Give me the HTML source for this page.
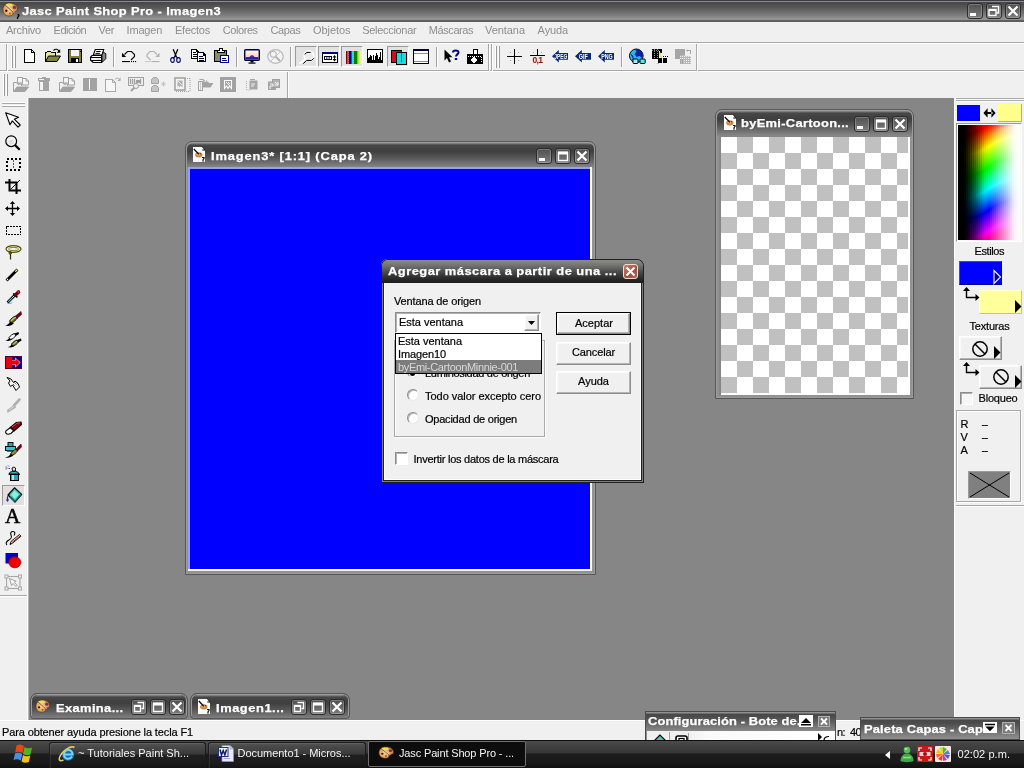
<!DOCTYPE html>
<html>
<head>
<meta charset="utf-8">
<title>Jasc Paint Shop Pro - Imagen3</title>
<style>
*{box-sizing:border-box;margin:0;padding:0}
html,body{width:1024px;height:768px;overflow:hidden;background:#868686;font-family:"Liberation Sans",sans-serif;font-size:11px;color:#000}
.abs{position:absolute}
.t{position:absolute;white-space:pre;line-height:1;font-family:"Liberation Sans",sans-serif}
#app{position:absolute;left:0;top:0;width:1024px;height:768px;overflow:hidden;will-change:transform}
#title{left:0;top:0;width:1024px;height:22px;background:linear-gradient(#3a3c44 0,#3a3c44 1px,#8c8c8c 1px,#8c8c8c 2px,#464646 2px,#4c4c4c 4px,#5a5a5a 8px,#777 14px,#939393 19px,#939393 20.300px,#5e5e5e 20.300px,#5e5e5e 22px)}
.wbtn{position:absolute;width:16px;height:16px;border:1px solid #2c2c2c;border-radius:3px;background:linear-gradient(#505050,#7c7c7c);box-shadow:inset 0 0 0 1px rgba(255,255,255,.22)}
.wbtn svg{position:absolute;left:-1px;top:-1px;width:16px;height:16px}
#menu{left:0;top:22px;width:1024px;height:21px;background:#f0f0f0;border-bottom:1px solid #a8a8a8}
#tb1{left:0;top:43px;width:1024px;height:28px;background:#f0f0f0;border-top:1px solid #fff;border-bottom:1px solid #a8a8a8}
#tb2{left:0;top:71px;width:1024px;height:27px;background:#f0f0f0;border-top:1px solid #fff}
.grip{position:absolute;width:2px;border-left:1px solid #fff;border-right:1px solid #9a9a9a}
.vsep{position:absolute;width:2px;border-left:1px solid #a0a0a0;border-right:1px solid #fff}
.ic{position:absolute;overflow:visible}
.pressed{position:absolute;border:1px solid;border-color:#9a9a9a #fff #fff #9a9a9a;background-color:#e2e2e2}
#lefttb{left:0;top:98px;width:28px;height:500px;background:#f0f0f0}
#right{left:954px;top:98px;width:70px;height:642px;background:#f0f0f0;border-left:1px solid #fff}
#status{left:0;top:720px;width:1024px;height:21px;background:#f0f0f0;border-top:1px solid #fff}
#taskbar{left:0;top:740px;width:1024px;height:28px;background:linear-gradient(#0c0c0c 0,#0c0c0c 1px,#4c4c4c 1px,#424242 5px,#363636 13px,#1c1c1c 14px,#1a1a1a 22px,#101010 28px)}
.mdi{position:absolute;background:#929292;border:1px solid #565656;border-radius:7px 7px 0 0;box-shadow:inset 0 0 0 1px #9c9c9c}
.mdit{position:absolute;left:1px;top:1px;right:1px;height:24px;border-radius:6px 6px 0 0;background:linear-gradient(#8e8e8e 0,#484848 2px,#3e3e3e 8px,#585858 15px,#7a7a7a 22px,#858585 24px)}
#checker{background-color:#fff;background-image:conic-gradient(#c0c0c0 0 25%,#fff 0 50%,#c0c0c0 0 75%,#fff 0);background-size:32px 32px;background-position:0 0}
.btn{position:absolute;background:#f0f0f0;border:1px solid;border-color:#fff #8c8c8c #8c8c8c #fff;box-shadow:inset -1px -1px 0 #b4b4b4,inset 1px 1px 0 #fafafa}
.sunk{position:absolute;background:#fff;border:1px solid;border-color:#8c8c8c #fff #fff #8c8c8c;box-shadow:inset 1px 1px 0 #b0b0b0}
.radio{position:absolute;width:12px;height:12px;border-radius:50%;background:#fff;border:1px solid;border-color:#8c8c8c #e8e8e8 #e8e8e8 #8c8c8c;box-shadow:inset 1px 1px 0 #b8b8b8}
.etch{position:absolute;border:1px solid #a8a8a8;box-shadow:1px 1px 0 #fff,inset 1px 1px 0 #fff}
.tbtn{position:absolute;top:2px;height:26px;border:1px solid #1c1c1c;border-bottom:none;border-radius:3px 3px 0 0;background:linear-gradient(#565656 0,#4a4a4a 3px,#3a3a3a 11px,#202020 12px,#1c1c1c 20px,#121212 26px);box-shadow:inset 1px 1px 0 rgba(255,255,255,.08)}
.pal{position:absolute;border:1px solid #4c4c4c;background:linear-gradient(#909090 0,#909090 1px,#484848 2px,#4c4c4c 5px,#606060 10px,#787878 15px,#8c8c8c 20px,#8c8c8c 100%)}
</style>
</head>
<body>
<div id="app">
<svg width="0" height="0" style="position:absolute"><defs>
<radialGradient id="palg" cx=".4" cy=".55" r=".7"><stop offset="0" stop-color="#f8d090"/><stop offset=".6" stop-color="#e0a050"/><stop offset="1" stop-color="#a87038"/></radialGradient>
<g id="palette"><path d="M1 7.500C1 3.500 4 1 8 1c4.500 0 7.500 2.500 7.500 6 0 2-1.500 2.500-3 2.500-1.500 0-2 1-1.500 2 .5 1.500-1.500 2.500-4 2.500-3.500 0-6-2.500-6-6.500z" fill="url(#palg)" stroke="#50381c" stroke-width=".7"/><ellipse cx="7" cy="3.200" rx="3.500" ry="1.600" fill="#e8e060"/><circle cx="4.300" cy="8.800" r="1.200" fill="#40100c"/><circle cx="12.500" cy="5.500" r="1.700" fill="#802878"/><circle cx="11.500" cy="9.500" r="1.300" fill="#e08070"/><circle cx="8" cy="11.500" r="1.100" fill="#b06020"/><path d="M3 3l8 7" stroke="#705030" stroke-width=".8"/><path d="M4.500 2.500l7 7" stroke="#f4e0b0" stroke-width=".7"/></g>
<g id="docicon"><path d="M0 0h9.500l2.500 2.500v12.500h-12z" fill="#fdfbf8"/><path d="M9.300 0l2.700 2.700M9.300 3h2.700" stroke="#000" stroke-width="1" fill="none"/><ellipse cx="5.800" cy="7.800" rx="3.700" ry="2.600" fill="#c88840"/><ellipse cx="5.500" cy="7.300" rx="2" ry="1.200" fill="#e8b070"/><circle cx="7.300" cy="6.800" r=".7" fill="#603010"/><path d="M0.800 2l5 5.300" stroke="#080820" stroke-width="1.300"/><path d="M9 10.500h2v1l-1 1.200v2" stroke="#000" stroke-width="1.100" fill="none"/></g>
</defs></svg>
<!-- TITLE BAR -->
<div id="title" class="abs"></div>
<svg class="ic" style="left:2px;top:2px" width="17" height="17" viewBox="0 0 17 17"><use href="#palette"/><path d="M15.500 12.500c1.500 0 2 1 1 2l-1 1v1.500" stroke="#000" stroke-width="1.300" fill="none"/></svg>
<div class="t" style="left:22px;top:6.27px;font-size:11.5px;font-weight:bold;color:#fff;letter-spacing:0.331px;transform:scaleX(1.12);transform-origin:0 0;-webkit-text-stroke:0.25px #fff;">Jasc Paint Shop Pro - Imagen3</div>
<div class="wbtn" style="left:967px;top:3px"><svg viewBox="0 0 16 16"><rect x="3" y="10" width="6" height="3" fill="#fff"/></svg></div>
<div class="wbtn" style="left:986px;top:3px"><svg viewBox="0 0 16 16"><path d="M6 3.5h6.5v6.5h-2" fill="none" stroke="#fff" stroke-width="1.6"/><rect x="3" y="6.5" width="7" height="6" fill="none" stroke="#fff" stroke-width="1.4"/><rect x="3" y="6" width="7" height="2" fill="#fff"/></svg></div>
<div class="wbtn" style="left:1005px;top:3px"><svg viewBox="0 0 16 16"><path d="M3.5 3.5l9 9M12.5 3.5l-9 9" stroke="#fff" stroke-width="2.2"/></svg></div>

<!-- MENU -->
<div id="menu" class="abs"></div>
<div class="t" style="left:6px;top:25.29px;font-size:11px;font-weight:normal;color:#8e8e8e;letter-spacing:-0.241px;">Archivo</div>
<div class="t" style="left:53.6px;top:25.29px;font-size:11px;font-weight:normal;color:#8e8e8e;letter-spacing:-0.511px;">Edición</div>
<div class="t" style="left:98.5px;top:25.29px;font-size:11px;font-weight:normal;color:#8e8e8e;letter-spacing:-0.339px;">Ver</div>
<div class="t" style="left:126.6px;top:25.29px;font-size:11px;font-weight:normal;color:#8e8e8e;letter-spacing:-0.201px;">Imagen</div>
<div class="t" style="left:175px;top:25.29px;font-size:11px;font-weight:normal;color:#8e8e8e;letter-spacing:-0.241px;">Efectos</div>
<div class="t" style="left:222.7px;top:25.29px;font-size:11px;font-weight:normal;color:#8e8e8e;letter-spacing:-0.415px;">Colores</div>
<div class="t" style="left:270.5px;top:25.29px;font-size:11px;font-weight:normal;color:#8e8e8e;letter-spacing:-0.359px;">Capas</div>
<div class="t" style="left:313px;top:25.29px;font-size:11px;font-weight:normal;color:#8e8e8e;letter-spacing:-0.060px;">Objetos</div>
<div class="t" style="left:362.3px;top:25.29px;font-size:11px;font-weight:normal;color:#8e8e8e;letter-spacing:-0.317px;">Seleccionar</div>
<div class="t" style="left:428.7px;top:25.29px;font-size:11px;font-weight:normal;color:#8e8e8e;letter-spacing:-0.398px;">Máscaras</div>
<div class="t" style="left:485px;top:25.29px;font-size:11px;font-weight:normal;color:#8e8e8e;letter-spacing:-0.054px;">Ventana</div>
<div class="t" style="left:537.6px;top:25.29px;font-size:11px;font-weight:normal;color:#8e8e8e;letter-spacing:-0.100px;">Ayuda</div>

<div id="tb1" class="abs"></div>
<div id="tb2" class="abs"></div>
<!--TOOLBAR1-->
<!--TOOLBAR2-->
<!-- TOOLBAR 1 frame -->
<div class="abs" style="left:6px;top:44px;width:1px;height:27px;background:#a8a8a8"></div>
<div class="abs" style="left:7px;top:44px;width:1px;height:27px;background:#fff"></div>
<div class="grip" style="left:11px;top:46px;height:22px"></div>
<div class="grip" style="left:14px;top:46px;height:22px"></div>
<!-- new -->
<svg class="ic" style="left:24px;top:49px" width="12" height="14" viewBox="0 0 12 14" shape-rendering="crispEdges"><path d="M0.5 0.5h7l3 3v9.5h-10z" fill="#fff" stroke="#000"/><path d="M7.5 0.5v3h3" fill="none" stroke="#000"/></svg>
<!-- open -->
<svg class="ic" style="left:45px;top:48px" width="16" height="15" viewBox="0 0 16 15"><path d="M0.5 13.5v-9h1l1-1h3l1 1h4v3" fill="#e6e6a0" stroke="#000" shape-rendering="crispEdges"/><path d="M0.5 13.5l3-5.5h12l-3.5 5.5z" fill="#808040" stroke="#000" stroke-linejoin="miter"/><path d="M8.5 2.5c2-2 4.5-1.5 5.5 1" fill="none" stroke="#000" stroke-width="1.1"/><path d="M15.2 1.2v3.6h-3.6z" fill="#000"/></svg>
<!-- save -->
<svg class="ic" style="left:68px;top:49px" width="14" height="14" viewBox="0 0 14 14" shape-rendering="crispEdges"><rect x="0.5" y="0.5" width="13" height="13" fill="#808040" stroke="#000"/><rect x="3" y="1" width="8" height="6" fill="#f4f4f4"/><rect x="3" y="9" width="8" height="4" fill="#000"/><rect x="8" y="10" width="2" height="3" fill="#fff"/><rect x="11.5" y="1.5" width="1" height="1" fill="#000"/></svg>
<!-- print -->
<svg class="ic" style="left:90px;top:48px" width="17" height="15" viewBox="0 0 17 15"><path d="M5.300 1.500h8.400l-1.700 5.500H3.300z" fill="#fff" stroke="#000" stroke-width="1.100"/><path d="M6.200 3.500h4.400M5.500 5.400h4.400" stroke="#000" stroke-width="1"/><path d="M11.800 7.200l1.500-3 2.500 1.500v5l-3.600 3.600z" fill="#8a8a8a" stroke="#000" stroke-width=".9"/><path d="M2 7.500h9.500v7H3L0.600 12V9z" fill="#fff" stroke="#000" stroke-width="1.100"/><path d="M0.600 9.500h11M0.600 12.500h11" stroke="#000" stroke-width="1.100"/><rect x="6.500" y="10.500" width="3.500" height="1" fill="#d0d0a0"/></svg>
<div class="vsep" style="left:113px;top:47px;height:20px"></div>
<!-- undo -->
<svg class="ic" style="left:122px;top:50px" width="15" height="13" viewBox="0 0 15 13"><path d="M2.500 4.500L5.500 1.500H9.500L12.500 4.500V6.500L9 10" fill="none" stroke="#000" stroke-width="1.100"/><path d="M0 2.800v4.200h4.200z" fill="#000"/><rect x="0" y="11" width="8" height="1.100" fill="#000"/><rect x="9" y="11" width="1.100" height="1.100" fill="#000"/><rect x="11" y="11" width="1.100" height="1.100" fill="#000"/><rect x="13" y="11" width="1.100" height="1.100" fill="#000"/></svg>
<!-- redo (disabled) -->
<svg class="ic" style="left:145px;top:50px" width="15" height="13" viewBox="0 0 15 13"><g transform="translate(14.500,0) scale(-1,1)"><path d="M2.500 4.500L5.500 1.500H9.500L12.500 4.500V6.500L9 10" fill="none" stroke="#b0b0b0" stroke-width="1.100"/><path d="M0 2.800v4.200h4.200z" fill="#b0b0b0"/><rect x="0" y="11" width="8" height="1.100" fill="#b0b0b0"/><rect x="9" y="11" width="1.100" height="1.100" fill="#b0b0b0"/><rect x="11" y="11" width="1.100" height="1.100" fill="#b0b0b0"/><rect x="13" y="11" width="1.100" height="1.100" fill="#b0b0b0"/></g></svg>
<!-- cut -->
<svg class="ic" style="left:170px;top:49px" width="11" height="14" viewBox="0 0 11 14"><path d="M3.200 0.300l3.300 8M7.800 0.300l-3.300 8" stroke="#000" stroke-width="1.300" fill="none"/><ellipse cx="2.500" cy="11" rx="1.800" ry="2.400" fill="none" stroke="#000060" stroke-width="1.100"/><ellipse cx="8.500" cy="11" rx="1.800" ry="2.400" fill="none" stroke="#000060" stroke-width="1.100"/><path d="M4.500 8l-1.200 1.200M6.500 8l1.200 1.200" stroke="#000060" stroke-width="1.200"/></svg>
<!-- copy -->
<svg class="ic" style="left:191px;top:49px" width="16" height="13" viewBox="0 0 16 13" shape-rendering="crispEdges"><path d="M0.500 0.500h5l2 2v6.500h-7z" fill="#fff" stroke="#000"/><path d="M2 3h3M2 5h4M2 7h4" stroke="#000"/><path d="M6.500 3.500h5.500l2.500 2.500v6.500h-8z" fill="#fff" stroke="#000030"/><path d="M8 7h4M8 9h5M8 11h5" stroke="#000030"/><path d="M5.500 0.500v2h2M12 3.500v2.500h2.500" fill="none" stroke="#000"/></svg>
<!-- paste -->
<svg class="ic" style="left:214px;top:48px" width="16" height="15" viewBox="0 0 16 15" shape-rendering="crispEdges"><rect x="0.500" y="2.500" width="12" height="11" fill="#8c8c6c" stroke="#000"/><path d="M3.500 4.500v-2h1.500l1-2h2l1 2h1.500v2z" fill="#fff" stroke="#000"/><rect x="6.500" y="7.500" width="8" height="7" fill="#fff" stroke="#000080"/><path d="M8 10h4M8 12h5" stroke="#000080"/></svg>
<div class="vsep" style="left:236px;top:47px;height:20px"></div>
<!-- monitor -->
<svg class="ic" style="left:244px;top:49px" width="16" height="15" viewBox="0 0 16 15"><defs><linearGradient id="sky" x1="0" y1="0" x2="0" y2="1"><stop offset="0" stop-color="#fff"/><stop offset=".6" stop-color="#ffd8c0"/><stop offset="1" stop-color="#fff"/></linearGradient></defs><rect x="0.700" y="0.700" width="14.600" height="10.600" rx="1" fill="url(#sky)" stroke="#000040" stroke-width="1.400"/><path d="M1.500 9.500V8h4c1-2.500 4-2.500 5 0h4v1.500z" fill="#6020a0"/><rect x="1.500" y="8.500" width="13" height="2" fill="#2020a0"/><rect x="6.500" y="11.500" width="3" height="2" fill="#000"/><rect x="4.500" y="13.500" width="7" height="1.200" fill="#000"/></svg>
<!-- gray circle -->
<svg class="ic" style="left:267px;top:49px" width="17" height="15" viewBox="0 0 17 15"><ellipse cx="8.500" cy="7.500" rx="7.700" ry="6.800" fill="#f4f4f4" stroke="#b8b8b8" stroke-width="1.200"/><circle cx="6.300" cy="5.300" r="3" fill="none" stroke="#b8b8b8" stroke-width="1.100"/><path d="M8.500 7.500l4.500 4.500" stroke="#b0b0b0" stroke-width="1.800"/><path d="M13.500 2.500l-10 10" stroke="#c4c4c4" stroke-width="1"/></svg>
<div class="vsep" style="left:290px;top:47px;height:20px"></div>
<!-- pressed: magnifier -->
<div class="pressed" style="left:295px;top:46px;width:22px;height:21px"></div>
<svg class="ic" style="left:298px;top:49px" width="17" height="16" viewBox="0 0 17 16"><path d="M9.200 2h3.600l2.900 2.900v3.800l-2.900 2.900H9.200L6.300 8.700V4.900z" fill="#ececec" stroke="#fff" stroke-width="1.500"/><path d="M7 10.300L1.300 14.700" stroke="#fff" stroke-width="1.800"/><path d="M6.800 5.500L8.600 3.400h4" fill="none" stroke="#000" stroke-width="1"/><path d="M15.600 9.300l-2.100 2.100H8.500L5.300 14.700" fill="none" stroke="#000" stroke-width="1"/></svg>
<!-- pressed: tool options -->
<div class="pressed" style="left:318px;top:46px;width:22px;height:21px"></div>
<svg class="ic" style="left:322px;top:52px" width="16" height="11" viewBox="0 0 16 11" shape-rendering="crispEdges"><rect x="0.500" y="0.500" width="15" height="10" fill="#fff" stroke="#000"/><rect x="0" y="0" width="16" height="2" fill="#000080"/><rect x="2" y="4" width="8" height="4" fill="#000020"/><g shape-rendering="auto"><rect x="3" y="5" width="1.400" height="2" fill="#fff"/><rect x="5.300" y="5" width="1.400" height="2" fill="#fff"/><rect x="7.600" y="5" width="1.400" height="2" fill="#fff"/></g><path d="M12.500 3l-2 2.500h4zM12.500 9.500l-2-2.500h4z" fill="#000" shape-rendering="auto"/><rect x="12" y="4" width="1" height="4" fill="#000"/></svg>
<!-- pressed: colour stripes -->
<div class="pressed" style="left:341px;top:46px;width:22px;height:21px"></div>
<svg class="ic" style="left:346px;top:51px;overflow:hidden" width="16" height="13" viewBox="0 0 16 13"><rect x="0" y="0" width="1.800" height="13" fill="#800000"/><rect x="1.500" y="0" width="1.700" height="13" fill="#e07088"/><rect x="3" y="0" width="2.700" height="13" fill="#000080"/><rect x="5.500" y="0" width="2.700" height="13" fill="#40e8e8"/><rect x="8" y="0" width="3.200" height="13" fill="#008000"/><rect x="11" y="0" width="2.700" height="13" fill="#a8f040"/><rect x="13.500" y="0" width="2.500" height="13" fill="#f8f4a0"/><path d="M3.200 0v13" stroke="#000080" stroke-width="1.200" stroke-dasharray="1 1"/><path d="M5.700 .5v13" stroke="#000080" stroke-width="1" stroke-dasharray="1 1"/><path d="M8.200 0v13" stroke="#008000" stroke-width="1" stroke-dasharray="1 1"/><path d="M11.200 .5v13" stroke="#008000" stroke-width="1" stroke-dasharray="1 1"/></svg>
<!-- histogram -->
<svg class="ic" style="left:367px;top:49px" width="16" height="14" viewBox="0 0 16 14" shape-rendering="crispEdges"><rect x="0" y="0" width="16" height="14" fill="#000"/><rect x="1" y="1" width="1" height="8" fill="#fff"/><rect x="2" y="1" width="1" height="7" fill="#fff"/><rect x="3" y="1" width="1" height="5" fill="#fff"/><rect x="4" y="1" width="1" height="6" fill="#fff"/><rect x="5" y="1" width="1" height="10" fill="#fff"/><rect x="6" y="1" width="1" height="5" fill="#fff"/><rect x="7" y="1" width="1" height="10" fill="#fff"/><rect x="8" y="1" width="1" height="6" fill="#fff"/><rect x="9" y="1" width="1" height="3" fill="#fff"/><rect x="10" y="1" width="1" height="5" fill="#fff"/><rect x="11" y="1" width="1" height="9" fill="#fff"/><rect x="12" y="1" width="1" height="7" fill="#fff"/><rect x="13" y="1" width="1" height="2" fill="#fff"/><rect x="14" y="1" width="1" height="10" fill="#fff"/></svg>
<!-- pressed: layers -->
<div class="pressed" style="left:387px;top:46px;width:22px;height:21px"></div>
<svg class="ic" style="left:391px;top:50px" width="16" height="15" viewBox="0 0 16 15" shape-rendering="crispEdges"><rect x="0.500" y="0.500" width="10" height="12" fill="#c81020" stroke="#000"/><rect x="5.500" y="2.500" width="10" height="12" fill="#20d8e0" stroke="#000"/><path d="M10.500 3v9" stroke="#0a7080"/></svg>
<!-- window -->
<svg class="ic" style="left:413px;top:49px" width="16" height="15" viewBox="0 0 16 15" shape-rendering="crispEdges"><rect x="0.500" y="0.500" width="15" height="14" fill="#fff" stroke="#000"/><rect x="0" y="0" width="16" height="2" fill="#000030"/><path d="M1 4.500h14M1 12.500h14" stroke="#909090"/></svg>
<div class="vsep" style="left:436px;top:47px;height:20px"></div>
<!-- help cursor -->
<svg class="ic" style="left:444px;top:49px" width="16" height="14" viewBox="0 0 16 14"><path d="M0.500 0.500v11l2.500-2.500 2 4.500 2-1-2-4.300h3.500z" fill="#000"/><path d="M9 3.500c0-2.500 5.500-2.800 5.500 0 0 1.800-2.500 2-2.500 4" fill="none" stroke="#000080" stroke-width="2"/><rect x="10.800" y="9" width="2.400" height="2" fill="#000080"/></svg>
<!-- camera -->
<svg class="ic" style="left:467px;top:49px" width="16" height="15" viewBox="0 0 16 15" shape-rendering="crispEdges"><rect x="6.500" y="0.500" width="4" height="5" fill="#fff" stroke="#000"/><rect x="0" y="5" width="16" height="10" fill="#000"/><path d="M1 7.500h14" stroke="#fff" stroke-dasharray="1 1"/><path d="M14.500 8v5" stroke="#fff" stroke-dasharray="1 1"/><path d="M5 9h1v-1h2v1h1v1h1v2h-1v1h-1v1h-2v-1h-1v-1h-1v-2h1z" fill="#fff"/></svg>
<div class="abs" style="left:488px;top:44px;width:1px;height:27px;background:#a8a8a8"></div>
<div class="abs" style="left:489px;top:44px;width:1px;height:27px;background:#fff"></div>
<!-- TOOLBAR 1b -->
<div class="abs" style="left:491px;top:44px;width:1px;height:27px;background:#a8a8a8"></div>
<div class="abs" style="left:492px;top:44px;width:1px;height:27px;background:#fff"></div>
<div class="grip" style="left:495px;top:46px;height:22px"></div>
<div class="grip" style="left:498px;top:46px;height:22px"></div>
<!-- crosshair -->
<svg class="ic" style="left:507px;top:49px" width="15" height="15" viewBox="0 0 15 15" shape-rendering="crispEdges"><path d="M0 7.500h15M7.500 0v15" stroke="#000"/><path d="M3.500 3v1M11.500 3v1M3.500 11v1M11.500 11v1" stroke="#a0a0a0"/></svg>
<!-- grid 0,1 -->
<svg class="ic" style="left:530px;top:49px" width="15" height="15" viewBox="0 0 15 15" shape-rendering="crispEdges"><path d="M0 6.500h15M7.500 0v6" stroke="#000"/><path d="M3.500 3v1M11.500 3v1" stroke="#a0a0a0"/><rect x="2" y="8" width="11" height="7" fill="#fbe4e0"/></svg>
<div class="t" style="left:532.5px;top:55.80px;font-size:8.5px;font-weight:bold;color:#802020;letter-spacing:-0.609px;">0,1</div>
<!-- JPEG GIF PNG -->
<svg class="ic" style="left:552px;top:50px" width="17" height="13" viewBox="0 0 17 13"><path d="M0 6.300L6.800 0V3H16V9.800H6.800V12.600z" fill="#0c2878"/><text x="2.2" y="8.900" font-family="Liberation Sans" font-size="7.500" font-weight="bold" fill="#fff" textLength="13" lengthAdjust="spacingAndGlyphs">JPEG</text></svg>
<svg class="ic" style="left:575px;top:50px" width="17" height="13" viewBox="0 0 17 13"><path d="M0 6.300L6.800 0V3H16V9.800H6.800V12.600z" fill="#0c2878"/><text x="3.8" y="8.900" font-family="Liberation Sans" font-size="7.500" font-weight="bold" fill="#fff" textLength="9" lengthAdjust="spacingAndGlyphs">GIF</text></svg>
<svg class="ic" style="left:598px;top:50px" width="17" height="13" viewBox="0 0 17 13"><path d="M0 6.300L6.800 0V3H16V9.800H6.800V12.600z" fill="#0c2878"/><text x="3.2" y="8.900" font-family="Liberation Sans" font-size="7.500" font-weight="bold" fill="#fff" textLength="11.5" lengthAdjust="spacingAndGlyphs">PNG</text></svg>
<div class="vsep" style="left:621px;top:47px;height:20px"></div>
<!-- globe -->
<svg class="ic" style="left:629px;top:48px" width="17" height="16" viewBox="0 0 17 16"><circle cx="7.300" cy="7.800" r="6.800" fill="#28b8f0" stroke="#000" stroke-width="1"/><path d="M7.300 1c4 0 6.800 3 6.800 6.800 0 1-.2 2-.6 2.700l-3-2.500-3 1-2-3 2-2.500-1.500-2c.4-.3.900-.5 1.300-.5z" fill="#0828a0"/><path d="M2 6.500c1.500 1 2.500 3 2 5.500" stroke="#0828a0" stroke-width="1.100" fill="none"/><rect x="4" y="11" width="5" height="4.500" rx=".8" fill="#a0ecf4" stroke="#000" stroke-width="1"/><rect x="11" y="11" width="5.200" height="4.500" rx=".8" fill="#60e0e8" stroke="#000" stroke-width="1"/></svg>
<!-- black squares -->
<svg class="ic" style="left:652px;top:49px" width="16" height="15" viewBox="0 0 16 15" shape-rendering="crispEdges"><rect x="0" y="0" width="10" height="10" fill="#000"/><path d="M2.500 0v10M5.500 0v10" stroke="#909090" stroke-dasharray="1 1"/><path d="M0 1.500h10" stroke="#808080" stroke-dasharray="1 1"/><rect x="7" y="2" width="3" height="7" fill="#f0f0e0"/><rect x="8" y="1" width="2" height="3" fill="#000"/><rect x="6" y="9" width="4" height="5" fill="#000"/><rect x="11" y="9" width="4" height="5" fill="#000"/><path d="M11 7.500h5" stroke="#000" stroke-dasharray="1 1"/><path d="M7.500 3l1 4 1.500 2" stroke="#e0d860" stroke-width="1.200" fill="none" shape-rendering="auto"/><path d="M6 14.500l1-1" stroke="#000" shape-rendering="auto"/></svg>
<!-- gray squares -->
<svg class="ic" style="left:675px;top:49px" width="16" height="15" viewBox="0 0 16 15" shape-rendering="crispEdges"><rect x="0" y="0" width="10" height="10" fill="#a6a6a6"/><rect x="5" y="6" width="11" height="9" fill="#b8b8b8"/><path d="M5 7.500h11M5 9.500h11M5 11.500h11M5 13.500h11" stroke="#ececec" stroke-dasharray="1 1"/><path d="M5.500 10v5M7.500 10v5" stroke="#a6a6a6"/><rect x="10" y="6" width="6" height="1" fill="#f0f0f0"/><path d="M11.500 1.500h3.500v3.500" stroke="#a8a8a8" fill="none"/><path d="M11 1.500l1.500-1.500v3z" fill="#a8a8a8" shape-rendering="auto"/></svg>
<div class="abs" style="left:696px;top:44px;width:1px;height:27px;background:#a8a8a8"></div>
<div class="abs" style="left:697px;top:44px;width:1px;height:27px;background:#fff"></div>
<!-- TOOLBAR 2 -->
<div class="grip" style="left:3px;top:74px;height:22px"></div>
<div class="grip" style="left:6px;top:74px;height:22px"></div>
<div class="abs" style="left:287px;top:72px;width:1px;height:26px;background:#a8a8a8"></div>
<div class="abs" style="left:288px;top:72px;width:1px;height:26px;background:#fff"></div>
<!-- 1 folder+pages -->
<svg class="ic" style="left:13px;top:77px" width="16" height="15" viewBox="0 0 16 15"><g id="fp"><rect x="4.500" y="0.500" width="5" height="5.500" fill="#f4f4f4" stroke="#a2a2a2"/><path d="M9.500 1.500h3.500l2.500 2.500v4h-6z" fill="#f6f6f6" stroke="#a2a2a2"/><path d="M13 1.500v2.500h2.500" fill="none" stroke="#a2a2a2"/><path d="M0.500 14.500v-9h3l1 1.500h4v2" fill="none" stroke="#a2a2a2"/><path d="M0.500 14.500L4 10h11.500l-3.500 4.500z" fill="#a2a2a2" stroke="#a2a2a2"/><path d="M5 8l2.500-2" stroke="#a2a2a2" stroke-width="1"/></g></svg>
<!-- 2 trash -->
<svg class="ic" style="left:38px;top:77px" width="13" height="14" viewBox="0 0 13 14" shape-rendering="crispEdges"><rect x="0.500" y="1.500" width="11" height="2" fill="#f4f4f4" stroke="#a4a4a4"/><rect x="4.500" y="0.500" width="3" height="1" fill="none" stroke="#a4a4a4"/><rect x="1.500" y="4.500" width="9" height="9" fill="#f4f4f4" stroke="#a4a4a4"/><rect x="5" y="4" width="6" height="10" fill="#a4a4a4"/><rect x="6" y="1" width="6" height="3" fill="#a4a4a4"/></svg>
<!-- 3 folder+pages -->
<svg class="ic" style="left:59px;top:77px" width="16" height="15" viewBox="0 0 16 15"><use href="#fp"/></svg>
<!-- 4 filled rect -->
<svg class="ic" style="left:83px;top:78px" width="14" height="13" viewBox="0 0 14 13" shape-rendering="crispEdges"><rect x="0" y="0" width="14" height="13" fill="#a2a2a2"/><rect x="6" y="1" width="1" height="11" fill="#fff"/></svg>
<!-- 5 page+arrow -->
<svg class="ic" style="left:105px;top:77px" width="16" height="15" viewBox="0 0 16 15"><path d="M0.500 2.500h7l3 3v9h-10z" fill="#f6f6f6" stroke="#a8a8a8" shape-rendering="crispEdges"/><path d="M7.500 2.500v3h3" fill="none" stroke="#a8a8a8"/><path d="M10 2.500c1.500-2 4-1.500 5 .5" fill="none" stroke="#a8a8a8"/><path d="M15.500 0.500v3.500h-3z" fill="#a8a8a8"/></svg>
<!-- 6 browse -->
<svg class="ic" style="left:128px;top:77px" width="16" height="15" viewBox="0 0 16 15"><rect x="0.500" y="0.500" width="15" height="8" fill="#ececec" stroke="#a0a0a0" shape-rendering="crispEdges"/><path d="M2.500 2v5M4.500 2v5M6.500 2v5M8.500 3v4M12.500 2v5" stroke="#a0a0a0" stroke-width="1.200"/><rect x="9" y="3" width="4" height="3" fill="#a0a0a0"/><circle cx="8" cy="9" r="2.500" fill="#f0f0f0" stroke="#a0a0a0"/><path d="M6.500 10.500l-3.500 3.500" stroke="#a0a0a0" stroke-width="2"/></svg>
<!-- 7 blobs -->
<svg class="ic" style="left:151px;top:77px" width="17" height="15" viewBox="0 0 17 15"><path d="M0.500 6.500v-4l2-2h3l2 2v4z" fill="#c4c4c4" stroke="#a4a4a4"/><path d="M0.500 14.500v-4l2-2h3l2 2v4z" fill="#c4c4c4" stroke="#a4a4a4"/><path d="M12.500 4.500v5M10 7h5M11 5.500l3 3M14 5.500l-3 3" stroke="#c0c0c0" stroke-width=".9"/></svg>
<!-- 8 mask outline -->
<svg class="ic" style="left:174px;top:77px" width="17" height="15" viewBox="0 0 17 15"><rect x="1" y="1" width="10" height="12" fill="#f4f4f4" stroke="#a4a4a4" stroke-width="1.600"/><path d="M3.500 3.500h5v7l-2-2-1 2-1-2-1 2z" fill="#b0b0b0"/><path d="M4 4l4 4" stroke="#f0f0f0"/><path d="M11 1.500h5.500M16 1v13M2 14.500h14" stroke="#a4a4a4" stroke-dasharray="1 1" fill="none"/></svg>
<!-- 9 folder+film -->
<svg class="ic" style="left:198px;top:79px" width="16" height="12" viewBox="0 0 16 12"><path d="M1.500 0.500h4v2" fill="none" stroke="#a4a4a4"/><rect x="0.500" y="2.500" width="4" height="9" fill="#f0f0f0" stroke="#a4a4a4"/><path d="M2 4h1M2 6h1M2 8h1M2 10h1" stroke="#a4a4a4"/><path d="M5 2.500h5l1 1.500h4.500l-3 4.500H5z" fill="#a4a4a4"/><path d="M6 1.500h4" stroke="#c0c0c0" stroke-dasharray="1 1"/></svg>
<!-- 10 filled mask -->
<svg class="ic" style="left:220px;top:77px" width="16" height="15" viewBox="0 0 16 15"><rect x="0" y="0" width="16" height="15" fill="#a2a2a2"/><path d="M4.500 3.500h7v8l-2-2.500-1.500 2.500-1.500-2.500-2 2.500z" fill="none" stroke="#fff" stroke-width="1.100"/><path d="M6 5l4 4M8 5l2 2" stroke="#fff" stroke-width=".9"/></svg>
<!-- 11 -->
<svg class="ic" style="left:246px;top:79px" width="12" height="11" viewBox="0 0 12 11"><rect x="3.500" y="1.500" width="8" height="9" fill="#a6a6a6"/><path d="M4 0.500h5" stroke="#a6a6a6"/><path d="M0.500 2v9h4" stroke="#b0b0b0" stroke-dasharray="1 1" fill="none"/><path d="M5 5h4M5 7h3" stroke="#f0f0f0"/></svg>
<!-- 12 -->
<svg class="ic" style="left:268px;top:79px" width="12" height="11" viewBox="0 0 12 11"><rect x="0" y="2.500" width="8" height="8.500" fill="#a6a6a6"/><rect x="4.500" y="0.500" width="7" height="8" fill="#b4b4b4" stroke="#a0a0a0"/><path d="M2 5h3v2h-3v3M7 3l3 3M10 3v3h-3" stroke="#f4f4f4" fill="none"/></svg>
<div class="abs" style="left:0;top:98px;width:28px;height:622px;background:#f0f0f0"></div>
<!-- LEFT TOOLBOX -->
<div class="abs" style="left:27px;top:98px;width:1px;height:622px;background:#fdfdfd"></div>
<div class="abs" style="left:28px;top:98px;width:1px;height:622px;background:#b4b4b4"></div>
<div class="abs" style="left:2px;top:102px;width:23px;height:1px;background:#fff"></div>
<div class="abs" style="left:2px;top:103px;width:23px;height:1px;background:#a8a8a8"></div>
<div class="abs" style="left:2px;top:105px;width:23px;height:1px;background:#fff"></div>
<div class="abs" style="left:2px;top:106px;width:23px;height:1px;background:#a8a8a8"></div>
<!-- arrow -->
<svg class="ic" style="left:5px;top:112px" width="17" height="17" viewBox="0 0 17 17"><path d="M0.700 0.700l4.300 12 2.300-3.800 5.700 6.300 2.200-2.200-5.900-5.800 4.200-1.900z" fill="#fff" stroke="#000" stroke-width="1.100" stroke-linejoin="round"/></svg>
<!-- zoom -->
<svg class="ic" style="left:5px;top:135px" width="16" height="16" viewBox="0 0 16 16"><circle cx="6.200" cy="6.200" r="5.400" fill="#f4f4f4" stroke="#000" stroke-width="1.200"/><circle cx="6.200" cy="6.800" r="2.600" fill="#e0e0e0"/><path d="M10.200 10.200l4.500 4.500" stroke="#000" stroke-width="2.300"/></svg>
<!-- selection -->
<svg class="ic" style="left:6px;top:158px" width="15" height="13" viewBox="0 0 15 13" shape-rendering="crispEdges"><rect x="1" y="1" width="13" height="11" fill="none" stroke="#000" stroke-width="2" stroke-dasharray="2 2"/><path d="M7.500 2v9" stroke="#606060" stroke-width="1" stroke-dasharray="2 1"/></svg>
<!-- crop -->
<svg class="ic" style="left:5px;top:179px" width="16" height="15" viewBox="0 0 16 15"><path d="M4.500 0v11.500H16M0 3.500h11.500V15" fill="none" stroke="#000" stroke-width="2"/><path d="M5.500 10.500L15 1" stroke="#000" stroke-width=".9"/></svg>
<!-- move -->
<svg class="ic" style="left:5px;top:201px" width="16" height="16" viewBox="0 0 16 16"><path d="M7.500 2v11M2 7.500h11" stroke="#000" stroke-width="1.300"/><path d="M7.500 0l2.600 3h-5.200zM7.500 15l2.600-3h-5.200zM0 7.500l3-2.600v5.200zM15 7.500l-3-2.600v5.200z" fill="#000"/></svg>
<!-- dashed rect -->
<svg class="ic" style="left:6px;top:226px" width="15" height="9" viewBox="0 0 15 9" shape-rendering="crispEdges"><rect x="0.500" y="0.500" width="14" height="8" fill="none" stroke="#000" stroke-width="1" stroke-dasharray="2 1"/></svg>
<!-- lasso -->
<svg class="ic" style="left:5px;top:245px" width="17" height="15" viewBox="0 0 17 15"><ellipse cx="8.500" cy="4" rx="7.500" ry="3.300" fill="#f4f4c0" stroke="#505000" stroke-width="1.200"/><ellipse cx="8.500" cy="4" rx="5" ry="1.600" fill="#f0f0f0" stroke="#606010" stroke-width=".8"/><path d="M5.500 6.500c-1 1.500 0 2.500 0 3.500v4.500" fill="none" stroke="#303000" stroke-width="1.200"/><circle cx="5.300" cy="8" r="1.300" fill="none" stroke="#404000" stroke-width=".9"/></svg>
<!-- magic wand -->
<svg class="ic" style="left:5px;top:267px" width="16" height="16" viewBox="0 0 16 16"><circle cx="12" cy="4" r="4" fill="#f8f8dc"/><path d="M1.500 13.500L12.500 2.500" stroke="#000" stroke-width="2.800"/><path d="M10.300 4.700l2-2" stroke="#fff" stroke-width="1.200"/><path d="M2 13l1-1" stroke="#fff" stroke-width="1.100"/></svg>
<!-- dropper -->
<svg class="ic" style="left:6px;top:289px" width="16" height="16" viewBox="0 0 16 16"><path d="M0 14.800h5.500l1-1.500z" fill="#40c8d8"/><path d="M1.500 13.500L9 6" stroke="#000" stroke-width="2.600"/><path d="M2.200 12.800L5.500 9.500" stroke="#50b8d8" stroke-width="1.100"/><path d="M5.500 9.500l3-3" stroke="#e8e8e8" stroke-width="1"/><path d="M7.300 4.300l4 4" stroke="#000" stroke-width="1.800"/><path d="M10 5.500l2.500-2.500" stroke="#780010" stroke-width="3.600" stroke-linecap="round"/><circle cx="12.500" cy="2.800" r=".9" fill="#d84050"/></svg>
<!-- brush -->
<svg class="ic" style="left:5px;top:311px" width="17" height="15" viewBox="0 0 17 15"><path d="M0 14.500c3-.5 4-2 5-4l4 1.500c-2 2.500-5 3.500-9 2.500z" fill="#000"/><path d="M4.500 10c1.500-2.500 4-4.500 6-5l1.500 2.500c-1 1.500-3 3.500-6 4.500z" fill="#707020" stroke="#000" stroke-width=".8"/><path d="M6 10c1-1.500 3-3 5-4" stroke="#d0d070" stroke-width="1.200" fill="none"/><path d="M10.500 5L16 0.500l.5 3L12 7.500z" fill="#700018" stroke="#400010" stroke-width=".6"/></svg>
<!-- clone brush -->
<svg class="ic" style="left:5px;top:332px" width="17" height="16" viewBox="0 0 17 16"><g id="br2"><path d="M0 8.500c2.500 0 3.500-1.500 4.500-3l3 1.500c-2 2-4.500 2.500-7.500 1.500z" fill="#000"/><path d="M4 5.500c1.500-2 3.500-3.500 5.500-4l1.200 2.300c-1 1.500-2.700 3-5.200 3.700z" fill="#f4f4f4" stroke="#000" stroke-width=".9"/><path d="M9.500 1.500l4-1.500.5 2-3.300 2z" fill="#000"/></g><g transform="translate(2.500,6.500)"><path d="M0 8.500c2.500 0 3.500-1.500 4.500-3l3 1.500c-2 2-4.500 2.500-7.500 1.500z" fill="#000"/><path d="M4 5.500c1.500-2 3.500-3.500 5.500-4l1.200 2.300c-1 1.500-2.700 3-5.200 3.700z" fill="#808030" stroke="#000" stroke-width=".9"/><path d="M5.500 6c1-1.300 2.500-2.500 4-3.200" stroke="#d8d880" stroke-width="1" fill="none"/><path d="M9.500 1.500l4-1.500.5 2-3.300 2z" fill="#000"/></g></svg>
<!-- colour replacer -->
<svg class="ic" style="left:5px;top:356px" width="17" height="13" viewBox="0 0 17 13"><rect x="0" y="0" width="8" height="13" fill="#e80010"/><rect x="8" y="0" width="8.500" height="13" fill="#000080"/><rect x="0.500" y="0.500" width="16" height="12" fill="none" stroke="#500028" stroke-width="1"/><path d="M7.500 4.300h3v-2.300l4.700 4.500-4.700 4.500v-2.300h-3z" fill="#e80010" stroke="#f8a0c8" stroke-width=".8"/><rect x="6" y="4.700" width="3" height="3.600" fill="#e80010"/><rect x="7.200" y="1" width="1.300" height="3" fill="#000080"/><rect x="7.200" y="9" width="1.300" height="3" fill="#000080"/></svg>
<!-- retouch finger -->
<svg class="ic" style="left:6px;top:376px" width="15" height="15" viewBox="0 0 15 15"><path d="M1 1.500l3 3.500-1.500 2 2 3.500 2-1.500 2 3 1.500 2.500 3.500-3.500-1.500-3.500-3-2.500-1.500 1.500-2.500-3.500z" fill="#f6f6f6" stroke="#000" stroke-width="1"/><path d="M8 6l3 3M9.500 5.500l2.500 2.500M7 8l2.500 2.500" stroke="#000" stroke-width=".8" stroke-dasharray="1 1"/></svg>
<!-- scratch remover (gray) -->
<svg class="ic" style="left:6px;top:398px" width="15" height="16" viewBox="0 0 15 16"><path d="M13.500 1.500L8 7.500" stroke="#b0b0b0" stroke-width="2.600" stroke-linecap="round"/><path d="M8.500 6.500l-7.500 5.500.5 3 8.500-5.500z" fill="#b0b0b0"/><path d="M3 12l5-3.500" stroke="#d8d8d8" stroke-width="1"/></svg>
<!-- eraser -->
<svg class="ic" style="left:5px;top:421px" width="17" height="14" viewBox="0 0 17 14"><path d="M1 9.800c-1 1.600 0 3.500 2.300 3.500l2.700-.8 3-3-3.500-3z" fill="#fff" stroke="#000" stroke-width="1.100"/><path d="M5.300 6.500l6-5 4.700-.5.500 2.500-7.500 6.500z" fill="#880010" stroke="#000" stroke-width="1.100"/><path d="M7 6l5-3.800 3-.3" stroke="#d04858" stroke-width="1" fill="none"/></svg>
<!-- picture tube -->
<svg class="ic" style="left:5px;top:442px" width="17" height="16" viewBox="0 0 17 16"><rect x="3" y="0.500" width="5" height="4" fill="#20b0b0" stroke="#000" stroke-width=".9"/><rect x="0.500" y="4.500" width="10" height="4" fill="#30c8c8" stroke="#000" stroke-width=".9"/><rect x="2" y="8.500" width="7" height="1.500" fill="#008080"/><path d="M0 15.500c3-.5 4.500-1.500 5.500-3.500l3 1c-2 2.500-5 3-8.500 2.500z" fill="#000"/><path d="M5.500 12c1.500-2.500 3.500-4 5.500-5l1.500 2c-1 1.500-3 3.500-5 4z" fill="#909020" stroke="#000" stroke-width=".8"/><path d="M11 7l5-5 .5 3-4 4z" fill="#700018" stroke="#300008" stroke-width=".6"/></svg>
<!-- airbrush -->
<svg class="ic" style="left:5px;top:465px" width="17" height="16" viewBox="0 0 17 16"><path d="M1 1.500l1 1M3 0.500l1 1M1 4.500l1-1M3.500 3.500h1.500M0.500 3h1" stroke="#2040c0" stroke-width="1"/><path d="M7 3l2-1 1.500 1v3h-3z" fill="#e0e0e0" stroke="#000" stroke-width=".9"/><path d="M4.500 8c0-2 9-2 9 0v1.500h-9z" fill="#40c0c8" stroke="#000" stroke-width="1"/><rect x="5.500" y="9.500" width="8" height="6" fill="#20a8b0" stroke="#000" stroke-width="1"/><rect x="7" y="10" width="2" height="5" fill="#a0f0f0"/><rect x="3.500" y="8.500" width="11.500" height="1.300" fill="#000"/></svg>
<!-- flood fill (pressed) -->
<div class="abs" style="left:2px;top:485px;width:23px;height:21px;border:1px solid;border-color:#9a9a9a #fff #fff #9a9a9a;background:#e4dede"></div>
<svg class="ic" style="left:5px;top:487px" width="18" height="16" viewBox="0 0 18 16"><path d="M9.500 0.800L16.700 7.400L10 15L3 8z" fill="#48c8b8" stroke="#000" stroke-width="1.200" stroke-linejoin="round"/><path d="M9.500 3.500l4.300 4-3.800 4.300-4-4z" fill="#90ecdc"/><path d="M5 9.500l5 5 6-7" stroke="#106860" stroke-width="1.300" fill="none"/><path d="M4.500 7.500c-1.500 1-2 2-2 3" fill="none" stroke="#000" stroke-width=".9"/><path d="M2.500 10v3" stroke="#1830b0" stroke-width="1.300"/><path d="M0.800 12.500h3.400l-1.700 2.500z" fill="#1830b0"/></svg>
<!-- text A -->
<div class="t" style="left:5px;top:506px;font-family:'Liberation Serif',serif;font-weight:normal;font-size:20px;color:#000;transform:scaleX(1.060);transform-origin:0 0;-webkit-text-stroke:.5px #000">A</div>
<!-- draw -->
<svg class="ic" style="left:5px;top:531px" width="17" height="15" viewBox="0 0 17 15"><path d="M2 14c-2-2 0-4 2-5s3-3 2-5 0-3.500 2-3.500 2.500 2 1 4" fill="none" stroke="#000" stroke-width="1.100"/><path d="M5 13.500l1-3 8.500-7 1.500 1.700-8.500 7z" fill="#f8e8d0" stroke="#000" stroke-width=".9"/><path d="M7 11.500l8-6.500" stroke="#903020" stroke-width="1"/><path d="M5 13.500l.8-1.800 1 1z" fill="#000"/></svg>
<!-- shapes -->
<svg class="ic" style="left:5px;top:553px" width="17" height="16" viewBox="0 0 17 16"><rect x="0.500" y="0" width="12.500" height="10.500" fill="#0000c8"/><ellipse cx="9.800" cy="9.300" rx="6" ry="5.500" fill="#f00000"/><ellipse cx="9.800" cy="9.300" rx="6" ry="5.500" fill="none" stroke="#a00000" stroke-width=".8"/></svg>
<!-- object selector (gray) -->
<svg class="ic" style="left:5px;top:575px" width="17" height="15" viewBox="0 0 17 15"><rect x="1.500" y="1.500" width="13.500" height="12" fill="none" stroke="#a8a8a8" stroke-width="1.100"/><rect x="0" y="0" width="3" height="3" fill="#f0f0f0" stroke="#a8a8a8"/><rect x="13.500" y="0" width="3" height="3" fill="#f0f0f0" stroke="#a8a8a8"/><rect x="0" y="12" width="3" height="3" fill="#f0f0f0" stroke="#a8a8a8"/><rect x="13.500" y="12" width="3" height="3" fill="#f0f0f0" stroke="#a8a8a8"/><path d="M4.500 3.500l2 7 1.500-2 3 3 1.200-1.200-3-3 2-1z" fill="#f8f8f8" stroke="#a0a0a0" stroke-width="1"/></svg>
<div class="abs" style="left:0;top:595px;width:27px;height:1px;background:#a8a8a8"></div>
<div class="abs" style="left:0;top:596px;width:27px;height:1px;background:#fff"></div>
<!-- IMAGEN3 WINDOW -->
<div class="mdi" style="left:185px;top:141px;width:411px;height:434px">
  <div class="mdit" style="height:25px"></div>
  <div class="wbtn" style="left:350px;top:6px"><svg viewBox="0 0 16 16"><rect x="3" y="10" width="6" height="3" fill="#fff"/></svg></div>
  <div class="wbtn" style="left:369px;top:6px"><svg viewBox="0 0 16 16"><rect x="3.500" y="4.500" width="9" height="8" fill="none" stroke="#fff" stroke-width="1.400"/><rect x="3" y="3.500" width="10" height="3" fill="#fff"/></svg></div>
  <div class="wbtn" style="left:388px;top:6px"><svg viewBox="0 0 16 16"><path d="M3.500 3.500l9 9M12.500 3.500l-9 9" stroke="#fff" stroke-width="2.200"/></svg></div>
  <div class="abs" style="left:2px;top:25px;width:404px;height:404px;background:#fff"></div>
  <div class="abs" style="left:2px;top:25px;width:402px;height:402px;background:#9c9cff"></div>
  <div class="abs" style="left:4px;top:27px;width:400px;height:400px;background:#0000fe"></div>
</div>
<svg class="ic" style="left:193px;top:147px" width="12" height="15" viewBox="0 0 12 15"><use href="#docicon"/></svg>
<div class="t" style="left:210.5px;top:151.27px;font-size:11.5px;font-weight:bold;color:#fff;letter-spacing:0.759px;transform:scaleX(1.12);transform-origin:0 0;-webkit-text-stroke:0.25px #fff;">Imagen3* [1:1] (Capa 2)</div>

<!-- byEmi WINDOW -->
<div class="mdi" style="left:715px;top:109px;width:199px;height:290px">
  <div class="mdit" style="height:25px"></div>
  <div class="wbtn" style="left:138px;top:6px"><svg viewBox="0 0 16 16"><rect x="3" y="10" width="6" height="3" fill="#fff"/></svg></div>
  <div class="wbtn" style="left:157px;top:6px"><svg viewBox="0 0 16 16"><rect x="3.500" y="4.500" width="9" height="8" fill="none" stroke="#fff" stroke-width="1.400"/><rect x="3" y="3.500" width="10" height="3" fill="#fff"/></svg></div>
  <div class="wbtn" style="left:176px;top:6px"><svg viewBox="0 0 16 16"><path d="M3.500 3.500l9 9M12.500 3.500l-9 9" stroke="#fff" stroke-width="2.200"/></svg></div>
  <div class="abs" style="left:3px;top:25px;width:191px;height:260px;background:#fff;border-left:2px solid #858585;border-top:2px solid #858585"></div>
  <div class="abs" id="checker" style="left:5px;top:27px;width:187px;height:256px"></div>
</div>
<svg class="ic" style="left:724px;top:115px" width="12" height="15" viewBox="0 0 12 15"><use href="#docicon"/></svg>
<div class="t" style="left:741px;top:118.27px;font-size:11.5px;font-weight:bold;color:#fff;letter-spacing:0.276px;transform:scaleX(1.12);transform-origin:0 0;-webkit-text-stroke:0.25px #fff;">byEmi-Cartoon...</div>
<!-- DIALOG -->
<div class="abs" style="left:381px;top:259px;width:263px;height:224px;background:#f0f0f0;border-radius:7px 7px 0 0;box-shadow:inset 0 0 0 1px #202020,inset 0 0 0 2px #7c7c7c,inset 0 0 0 3px #202020,inset 0 0 0 4px #fff"></div>
<div class="abs" style="left:382px;top:260px;width:261px;height:23px;border-radius:6px 6px 0 0;background:linear-gradient(#8c8c86 0,#84847e 2px,#6a6a68 7px,#4a4a4a 12px,#2c2c2c 18px,#1c1c1c 23px)"></div>
<div class="t" style="left:388px;top:266.27px;font-size:11.5px;font-weight:bold;color:#fff;letter-spacing:0.436px;transform:scaleX(1.12);transform-origin:0 0;-webkit-text-stroke:0.25px #fff;">Agregar máscara a partir de una ...</div>
<div class="abs" style="left:623px;top:264px;width:15px;height:15px;border-radius:3px;border:1px solid #f4dcd0;background:linear-gradient(135deg,#c88070,#a84c3c 60%,#b86454)"><svg viewBox="0 0 13 13" style="position:absolute;left:0;top:0;width:13px;height:13px"><path d="M2.5 2.5l8 8M10.5 2.5l-8 8" stroke="#fff" stroke-width="2"/></svg></div>

<div class="t" style="left:394px;top:295.69px;font-size:11px;font-weight:normal;color:#000;letter-spacing:-0.136px;-webkit-text-stroke:0.2px #000;">Ventana de origen</div>
<!-- group box -->
<div class="etch" style="left:394px;top:340px;width:151px;height:97px"></div>
<!-- radios -->
<div class="radio" style="left:407px;top:366px"></div>
<div class="abs" style="left:410px;top:371px;width:5px;height:5px;border-radius:50%;background:#000"></div>
<div class="t" style="left:425px;top:368.19px;font-size:11px;font-weight:normal;color:#000;letter-spacing:-0.301px;-webkit-text-stroke:0.2px #000;">Luminosidad de origen</div>
<div class="radio" style="left:407px;top:389px"></div>
<div class="t" style="left:425px;top:390.69px;font-size:11px;font-weight:normal;color:#000;letter-spacing:-0.035px;-webkit-text-stroke:0.2px #000;">Todo valor excepto cero</div>
<div class="radio" style="left:407px;top:412px"></div>
<div class="t" style="left:425px;top:413.69px;font-size:11px;font-weight:normal;color:#000;letter-spacing:-0.223px;-webkit-text-stroke:0.2px #000;">Opacidad de origen</div>
<!-- combo -->
<div class="sunk" style="left:395px;top:312px;width:146px;height:21px"></div>
<div class="t" style="left:399px;top:317.19px;font-size:11px;font-weight:normal;color:#000;letter-spacing:-0.018px;-webkit-text-stroke:0.2px #000;">Esta ventana</div>
<div class="btn" style="left:524px;top:314px;width:15px;height:17px"><svg viewBox="0 0 13 15" style="position:absolute;left:0;top:0;width:13px;height:15px"><path d="M3 6h7l-3.5 4z" fill="#000"/></svg></div>
<!-- dropdown list -->
<div class="abs" style="left:395px;top:333px;width:147px;height:41px;background:#fff;border:1px solid #000"></div>
<div class="abs" style="left:396px;top:360px;width:145px;height:13px;background:#7c7c7c"></div>
<div class="t" style="left:398px;top:335.69px;font-size:11px;font-weight:normal;color:#000;letter-spacing:-0.018px;-webkit-text-stroke:0.2px #000;">Esta ventana</div>
<div class="t" style="left:398px;top:348.69px;font-size:11px;font-weight:normal;color:#000;letter-spacing:-0.117px;-webkit-text-stroke:0.2px #000;">Imagen10</div>
<div class="t" style="left:398px;top:361.69px;font-size:11px;font-weight:normal;color:#d8d8d8;letter-spacing:-0.338px;">byEmi-CartoonMinnie-001</div>
<!-- buttons -->
<div class="abs" style="left:556px;top:312px;width:75px;height:23px;background:#000"></div>
<div class="btn" style="left:557px;top:313px;width:73px;height:21px"></div>
<div class="t" style="left:575px;top:317.69px;font-size:11px;font-weight:normal;color:#000;letter-spacing:0.011px;-webkit-text-stroke:0.2px #000;">Aceptar</div>
<div class="btn" style="left:556px;top:342px;width:75px;height:23px"></div>
<div class="t" style="left:572px;top:347.19px;font-size:11px;font-weight:normal;color:#000;letter-spacing:-0.129px;-webkit-text-stroke:0.2px #000;">Cancelar</div>
<div class="btn" style="left:556px;top:371px;width:75px;height:23px"></div>
<div class="t" style="left:578px;top:376.19px;font-size:11px;font-weight:normal;color:#000;letter-spacing:0.000px;-webkit-text-stroke:0.2px #000;">Ayuda</div>
<!-- checkbox -->
<div class="sunk" style="left:395px;top:452px;width:13px;height:13px"></div>
<div class="t" style="left:413.5px;top:453.69px;font-size:11px;font-weight:normal;color:#000;letter-spacing:-0.246px;-webkit-text-stroke:0.2px #000;">Invertir los datos de la máscara</div>
<!-- RIGHT PANEL -->
<div id="right" class="abs"></div>
<div class="abs" style="left:956px;top:98px;width:68px;height:1px;background:#a8a8a8"></div>
<div class="abs" style="left:956px;top:99px;width:68px;height:1px;background:#fff"></div>
<div class="abs" style="left:956px;top:100px;width:68px;height:1px;background:#a8a8a8"></div>
<div class="abs" style="left:956px;top:101px;width:68px;height:1px;background:#fff"></div>
<div class="abs" style="left:957px;top:105px;width:23px;height:16px;background:#0000fe"></div>
<div class="abs" style="left:998px;top:104px;width:24px;height:18px;background:#ffff8c;border-right:1px solid #b0b090;border-bottom:1px solid #b0b090"></div>
<svg class="ic" style="left:983px;top:108px" width="13" height="10" viewBox="0 0 15 10" preserveAspectRatio="none"><path d="M0.500 5l4.800-4.800v9.600zM14.500 5l-4.800-4.800v9.600zM4 3.900h7v2.200H4z" fill="#000"/></svg>
<!-- colour picker -->
<div class="abs" style="left:956px;top:123px;width:66px;height:119px;border:1px solid;border-color:#9a9a9a #fff #fff #9a9a9a;background:#f8f8f8"></div>
<svg class="ic" style="left:958px;top:125px;overflow:hidden" width="62" height="115" viewBox="0 0 62 115" shape-rendering="crispEdges"><defs><linearGradient id="cp0" x1="0" y1="0" x2="0" y2="1"><stop offset="0.086" stop-color="#000000"/><stop offset="0.179" stop-color="#000000"/><stop offset="0.271" stop-color="#000000"/><stop offset="0.363" stop-color="#000000"/><stop offset="0.456" stop-color="#000000"/><stop offset="0.548" stop-color="#000000"/><stop offset="0.640" stop-color="#000000"/><stop offset="0.732" stop-color="#000000"/><stop offset="0.825" stop-color="#000000"/><stop offset="0.917" stop-color="#000000"/><stop offset="1.000" stop-color="#000000"/><stop offset="1.000" stop-color="#000000"/></linearGradient><linearGradient id="cp1" x1="0" y1="0" x2="0" y2="1"><stop offset="0.085" stop-color="#000000"/><stop offset="0.178" stop-color="#000000"/><stop offset="0.270" stop-color="#000000"/><stop offset="0.362" stop-color="#000000"/><stop offset="0.455" stop-color="#000000"/><stop offset="0.547" stop-color="#000000"/><stop offset="0.639" stop-color="#000000"/><stop offset="0.731" stop-color="#000000"/><stop offset="0.824" stop-color="#000000"/><stop offset="0.916" stop-color="#000000"/><stop offset="1.000" stop-color="#000000"/><stop offset="1.000" stop-color="#000000"/></linearGradient><linearGradient id="cp2" x1="0" y1="0" x2="0" y2="1"><stop offset="0.084" stop-color="#000000"/><stop offset="0.176" stop-color="#000000"/><stop offset="0.269" stop-color="#000000"/><stop offset="0.361" stop-color="#000000"/><stop offset="0.453" stop-color="#000000"/><stop offset="0.545" stop-color="#000000"/><stop offset="0.638" stop-color="#000000"/><stop offset="0.730" stop-color="#000000"/><stop offset="0.822" stop-color="#000000"/><stop offset="0.915" stop-color="#000000"/><stop offset="1.000" stop-color="#000000"/><stop offset="1.000" stop-color="#000000"/></linearGradient><linearGradient id="cp3" x1="0" y1="0" x2="0" y2="1"><stop offset="0.082" stop-color="#070000"/><stop offset="0.175" stop-color="#070300"/><stop offset="0.267" stop-color="#070700"/><stop offset="0.359" stop-color="#030700"/><stop offset="0.451" stop-color="#000700"/><stop offset="0.544" stop-color="#000703"/><stop offset="0.636" stop-color="#000707"/><stop offset="0.728" stop-color="#000307"/><stop offset="0.821" stop-color="#000007"/><stop offset="0.913" stop-color="#030007"/><stop offset="1.000" stop-color="#070007"/><stop offset="1.000" stop-color="#070004"/></linearGradient><linearGradient id="cp4" x1="0" y1="0" x2="0" y2="1"><stop offset="0.080" stop-color="#170000"/><stop offset="0.172" stop-color="#170c00"/><stop offset="0.265" stop-color="#171700"/><stop offset="0.357" stop-color="#0c1700"/><stop offset="0.449" stop-color="#001700"/><stop offset="0.542" stop-color="#00170c"/><stop offset="0.634" stop-color="#001717"/><stop offset="0.726" stop-color="#000c17"/><stop offset="0.819" stop-color="#000017"/><stop offset="0.911" stop-color="#0c0017"/><stop offset="1.000" stop-color="#170017"/><stop offset="1.000" stop-color="#17000d"/></linearGradient><linearGradient id="cp5" x1="0" y1="0" x2="0" y2="1"><stop offset="0.077" stop-color="#270000"/><stop offset="0.170" stop-color="#271400"/><stop offset="0.262" stop-color="#272700"/><stop offset="0.354" stop-color="#142700"/><stop offset="0.447" stop-color="#002700"/><stop offset="0.539" stop-color="#002714"/><stop offset="0.631" stop-color="#002727"/><stop offset="0.723" stop-color="#001427"/><stop offset="0.816" stop-color="#000027"/><stop offset="0.908" stop-color="#140027"/><stop offset="1.000" stop-color="#270027"/><stop offset="1.000" stop-color="#270017"/></linearGradient><linearGradient id="cp6" x1="0" y1="0" x2="0" y2="1"><stop offset="0.074" stop-color="#3a0000"/><stop offset="0.166" stop-color="#3a1d00"/><stop offset="0.259" stop-color="#3a3a00"/><stop offset="0.351" stop-color="#1d3a00"/><stop offset="0.443" stop-color="#003a00"/><stop offset="0.535" stop-color="#003a1d"/><stop offset="0.628" stop-color="#003a3a"/><stop offset="0.720" stop-color="#001d3a"/><stop offset="0.812" stop-color="#00003a"/><stop offset="0.905" stop-color="#1d003a"/><stop offset="0.997" stop-color="#3a003a"/><stop offset="1.000" stop-color="#3a0022"/></linearGradient><linearGradient id="cp7" x1="0" y1="0" x2="0" y2="1"><stop offset="0.070" stop-color="#510000"/><stop offset="0.162" stop-color="#512800"/><stop offset="0.254" stop-color="#515100"/><stop offset="0.347" stop-color="#285100"/><stop offset="0.439" stop-color="#005100"/><stop offset="0.531" stop-color="#005128"/><stop offset="0.624" stop-color="#005151"/><stop offset="0.716" stop-color="#002851"/><stop offset="0.808" stop-color="#000051"/><stop offset="0.901" stop-color="#280051"/><stop offset="0.993" stop-color="#510051"/><stop offset="1.000" stop-color="#51002f"/></linearGradient><linearGradient id="cp8" x1="0" y1="0" x2="0" y2="1"><stop offset="0.065" stop-color="#680000"/><stop offset="0.157" stop-color="#683400"/><stop offset="0.249" stop-color="#686800"/><stop offset="0.342" stop-color="#346800"/><stop offset="0.434" stop-color="#006800"/><stop offset="0.526" stop-color="#006834"/><stop offset="0.618" stop-color="#006868"/><stop offset="0.711" stop-color="#003468"/><stop offset="0.803" stop-color="#000068"/><stop offset="0.895" stop-color="#340068"/><stop offset="0.988" stop-color="#680068"/><stop offset="1.000" stop-color="#68003d"/></linearGradient><linearGradient id="cp9" x1="0" y1="0" x2="0" y2="1"><stop offset="0.058" stop-color="#800000"/><stop offset="0.151" stop-color="#804000"/><stop offset="0.243" stop-color="#808000"/><stop offset="0.335" stop-color="#408000"/><stop offset="0.428" stop-color="#008000"/><stop offset="0.520" stop-color="#008040"/><stop offset="0.612" stop-color="#008080"/><stop offset="0.705" stop-color="#004080"/><stop offset="0.797" stop-color="#000080"/><stop offset="0.889" stop-color="#400080"/><stop offset="0.982" stop-color="#800080"/><stop offset="1.000" stop-color="#80004b"/></linearGradient><linearGradient id="cp10" x1="0" y1="0" x2="0" y2="1"><stop offset="0.051" stop-color="#9d0000"/><stop offset="0.143" stop-color="#9d4e00"/><stop offset="0.236" stop-color="#9d9d00"/><stop offset="0.328" stop-color="#4e9d00"/><stop offset="0.420" stop-color="#009d00"/><stop offset="0.513" stop-color="#009d4e"/><stop offset="0.605" stop-color="#009d9d"/><stop offset="0.697" stop-color="#004e9d"/><stop offset="0.790" stop-color="#00009d"/><stop offset="0.882" stop-color="#4e009d"/><stop offset="0.974" stop-color="#9d009d"/><stop offset="1.000" stop-color="#9d005c"/></linearGradient><linearGradient id="cp11" x1="0" y1="0" x2="0" y2="1"><stop offset="0.043" stop-color="#ba0000"/><stop offset="0.135" stop-color="#ba5d00"/><stop offset="0.227" stop-color="#baba00"/><stop offset="0.320" stop-color="#5dba00"/><stop offset="0.412" stop-color="#00ba00"/><stop offset="0.504" stop-color="#00ba5d"/><stop offset="0.597" stop-color="#00baba"/><stop offset="0.689" stop-color="#005dba"/><stop offset="0.781" stop-color="#0000ba"/><stop offset="0.873" stop-color="#5d00ba"/><stop offset="0.966" stop-color="#ba00ba"/><stop offset="1.000" stop-color="#ba006c"/></linearGradient><linearGradient id="cp12" x1="0" y1="0" x2="0" y2="1"><stop offset="0.033" stop-color="#d70000"/><stop offset="0.126" stop-color="#d76b00"/><stop offset="0.218" stop-color="#d7d700"/><stop offset="0.310" stop-color="#6bd700"/><stop offset="0.402" stop-color="#00d700"/><stop offset="0.495" stop-color="#00d76b"/><stop offset="0.587" stop-color="#00d7d7"/><stop offset="0.679" stop-color="#006bd7"/><stop offset="0.772" stop-color="#0000d7"/><stop offset="0.864" stop-color="#6b00d7"/><stop offset="0.956" stop-color="#d700d7"/><stop offset="1.000" stop-color="#d7007d"/></linearGradient><linearGradient id="cp13" x1="0" y1="0" x2="0" y2="1"><stop offset="0.023" stop-color="#ea0000"/><stop offset="0.115" stop-color="#ea7500"/><stop offset="0.207" stop-color="#eaea00"/><stop offset="0.300" stop-color="#75ea00"/><stop offset="0.392" stop-color="#00ea00"/><stop offset="0.484" stop-color="#00ea75"/><stop offset="0.577" stop-color="#00eaea"/><stop offset="0.669" stop-color="#0075ea"/><stop offset="0.761" stop-color="#0000ea"/><stop offset="0.853" stop-color="#7500ea"/><stop offset="0.946" stop-color="#ea00ea"/><stop offset="1.000" stop-color="#ea0089"/></linearGradient><linearGradient id="cp14" x1="0" y1="0" x2="0" y2="1"><stop offset="0.012" stop-color="#f50000"/><stop offset="0.104" stop-color="#f57a00"/><stop offset="0.196" stop-color="#f5f500"/><stop offset="0.288" stop-color="#7af500"/><stop offset="0.381" stop-color="#00f500"/><stop offset="0.473" stop-color="#00f57a"/><stop offset="0.565" stop-color="#00f5f5"/><stop offset="0.658" stop-color="#007af5"/><stop offset="0.750" stop-color="#0000f5"/><stop offset="0.842" stop-color="#7a00f5"/><stop offset="0.935" stop-color="#f500f5"/><stop offset="1.000" stop-color="#f5008f"/></linearGradient><linearGradient id="cp15" x1="0" y1="0" x2="0" y2="1"><stop offset="0.000" stop-color="#ff0000"/><stop offset="0.092" stop-color="#ff8000"/><stop offset="0.185" stop-color="#ffff00"/><stop offset="0.277" stop-color="#80ff00"/><stop offset="0.369" stop-color="#00ff00"/><stop offset="0.462" stop-color="#00ff80"/><stop offset="0.554" stop-color="#00ffff"/><stop offset="0.646" stop-color="#007fff"/><stop offset="0.738" stop-color="#0000ff"/><stop offset="0.831" stop-color="#7f00ff"/><stop offset="0.923" stop-color="#ff00ff"/><stop offset="1.000" stop-color="#ff0095"/></linearGradient><linearGradient id="cp16" x1="0" y1="0" x2="0" y2="1"><stop offset="0.000" stop-color="#ff1010"/><stop offset="0.081" stop-color="#ff8810"/><stop offset="0.173" stop-color="#ffff10"/><stop offset="0.265" stop-color="#88ff10"/><stop offset="0.358" stop-color="#10ff10"/><stop offset="0.450" stop-color="#10ff88"/><stop offset="0.542" stop-color="#10ffff"/><stop offset="0.635" stop-color="#1088ff"/><stop offset="0.727" stop-color="#1010ff"/><stop offset="0.819" stop-color="#8810ff"/><stop offset="0.912" stop-color="#ff10ff"/><stop offset="0.988" stop-color="#ff109c"/></linearGradient><linearGradient id="cp17" x1="0" y1="0" x2="0" y2="1"><stop offset="0.000" stop-color="#ff2121"/><stop offset="0.070" stop-color="#ff9021"/><stop offset="0.162" stop-color="#ffff21"/><stop offset="0.254" stop-color="#90ff21"/><stop offset="0.347" stop-color="#21ff21"/><stop offset="0.439" stop-color="#21ff90"/><stop offset="0.531" stop-color="#21ffff"/><stop offset="0.623" stop-color="#2190ff"/><stop offset="0.716" stop-color="#2121ff"/><stop offset="0.808" stop-color="#9021ff"/><stop offset="0.900" stop-color="#ff21ff"/><stop offset="0.977" stop-color="#ff21a2"/></linearGradient><linearGradient id="cp18" x1="0" y1="0" x2="0" y2="1"><stop offset="0.000" stop-color="#ff3131"/><stop offset="0.059" stop-color="#ff9831"/><stop offset="0.151" stop-color="#ffff31"/><stop offset="0.244" stop-color="#98ff31"/><stop offset="0.336" stop-color="#31ff31"/><stop offset="0.428" stop-color="#31ff98"/><stop offset="0.521" stop-color="#31ffff"/><stop offset="0.613" stop-color="#3198ff"/><stop offset="0.705" stop-color="#3131ff"/><stop offset="0.798" stop-color="#9831ff"/><stop offset="0.890" stop-color="#ff31ff"/><stop offset="0.967" stop-color="#ff31a9"/></linearGradient><linearGradient id="cp19" x1="0" y1="0" x2="0" y2="1"><stop offset="0.000" stop-color="#ff4545"/><stop offset="0.050" stop-color="#ffa245"/><stop offset="0.142" stop-color="#ffff45"/><stop offset="0.234" stop-color="#a2ff45"/><stop offset="0.327" stop-color="#45ff45"/><stop offset="0.419" stop-color="#45ffa2"/><stop offset="0.511" stop-color="#45ffff"/><stop offset="0.603" stop-color="#45a2ff"/><stop offset="0.696" stop-color="#4545ff"/><stop offset="0.788" stop-color="#a245ff"/><stop offset="0.880" stop-color="#ff45ff"/><stop offset="0.957" stop-color="#ff45b1"/></linearGradient><linearGradient id="cp20" x1="0" y1="0" x2="0" y2="1"><stop offset="0.000" stop-color="#ff5959"/><stop offset="0.041" stop-color="#ffac59"/><stop offset="0.133" stop-color="#ffff59"/><stop offset="0.226" stop-color="#acff59"/><stop offset="0.318" stop-color="#59ff59"/><stop offset="0.410" stop-color="#59ffac"/><stop offset="0.503" stop-color="#59ffff"/><stop offset="0.595" stop-color="#59acff"/><stop offset="0.687" stop-color="#5959ff"/><stop offset="0.780" stop-color="#ac59ff"/><stop offset="0.872" stop-color="#ff59ff"/><stop offset="0.949" stop-color="#ff59ba"/></linearGradient><linearGradient id="cp21" x1="0" y1="0" x2="0" y2="1"><stop offset="0.000" stop-color="#ff6c6c"/><stop offset="0.034" stop-color="#ffb66c"/><stop offset="0.126" stop-color="#ffff6c"/><stop offset="0.218" stop-color="#b6ff6c"/><stop offset="0.311" stop-color="#6cff6c"/><stop offset="0.403" stop-color="#6cffb6"/><stop offset="0.495" stop-color="#6cffff"/><stop offset="0.588" stop-color="#6cb6ff"/><stop offset="0.680" stop-color="#6c6cff"/><stop offset="0.772" stop-color="#b66cff"/><stop offset="0.865" stop-color="#ff6cff"/><stop offset="0.942" stop-color="#ff6cc2"/></linearGradient><linearGradient id="cp22" x1="0" y1="0" x2="0" y2="1"><stop offset="0.000" stop-color="#ff8080"/><stop offset="0.028" stop-color="#ffbf80"/><stop offset="0.120" stop-color="#ffff80"/><stop offset="0.212" stop-color="#bfff80"/><stop offset="0.305" stop-color="#80ff80"/><stop offset="0.397" stop-color="#80ffbf"/><stop offset="0.489" stop-color="#80ffff"/><stop offset="0.582" stop-color="#80bfff"/><stop offset="0.674" stop-color="#8080ff"/><stop offset="0.766" stop-color="#bf80ff"/><stop offset="0.858" stop-color="#ff80ff"/><stop offset="0.935" stop-color="#ff80ca"/></linearGradient><linearGradient id="cp23" x1="0" y1="0" x2="0" y2="1"><stop offset="0.000" stop-color="#ff9494"/><stop offset="0.023" stop-color="#ffc994"/><stop offset="0.115" stop-color="#ffff94"/><stop offset="0.207" stop-color="#c9ff94"/><stop offset="0.299" stop-color="#94ff94"/><stop offset="0.392" stop-color="#94ffc9"/><stop offset="0.484" stop-color="#94ffff"/><stop offset="0.576" stop-color="#94c9ff"/><stop offset="0.669" stop-color="#9494ff"/><stop offset="0.761" stop-color="#c994ff"/><stop offset="0.853" stop-color="#ff94ff"/><stop offset="0.930" stop-color="#ff94d2"/></linearGradient><linearGradient id="cp24" x1="0" y1="0" x2="0" y2="1"><stop offset="0.000" stop-color="#ffa7a7"/><stop offset="0.018" stop-color="#ffd3a7"/><stop offset="0.111" stop-color="#ffffa7"/><stop offset="0.203" stop-color="#d3ffa7"/><stop offset="0.295" stop-color="#a7ffa7"/><stop offset="0.388" stop-color="#a7ffd3"/><stop offset="0.480" stop-color="#a7ffff"/><stop offset="0.572" stop-color="#a7d3ff"/><stop offset="0.665" stop-color="#a7a7ff"/><stop offset="0.757" stop-color="#d3a7ff"/><stop offset="0.849" stop-color="#ffa7ff"/><stop offset="0.926" stop-color="#ffa7db"/></linearGradient><linearGradient id="cp25" x1="0" y1="0" x2="0" y2="1"><stop offset="0.000" stop-color="#ffbbbb"/><stop offset="0.015" stop-color="#ffddbb"/><stop offset="0.107" stop-color="#ffffbb"/><stop offset="0.200" stop-color="#ddffbb"/><stop offset="0.292" stop-color="#bbffbb"/><stop offset="0.384" stop-color="#bbffdd"/><stop offset="0.477" stop-color="#bbffff"/><stop offset="0.569" stop-color="#bbddff"/><stop offset="0.661" stop-color="#bbbbff"/><stop offset="0.753" stop-color="#ddbbff"/><stop offset="0.846" stop-color="#ffbbff"/><stop offset="0.923" stop-color="#ffbbe3"/></linearGradient><linearGradient id="cp26" x1="0" y1="0" x2="0" y2="1"><stop offset="0.000" stop-color="#ffcfcf"/><stop offset="0.012" stop-color="#ffe7cf"/><stop offset="0.105" stop-color="#ffffcf"/><stop offset="0.197" stop-color="#e7ffcf"/><stop offset="0.289" stop-color="#cfffcf"/><stop offset="0.381" stop-color="#cfffe7"/><stop offset="0.474" stop-color="#cfffff"/><stop offset="0.566" stop-color="#cfe7ff"/><stop offset="0.658" stop-color="#cfcfff"/><stop offset="0.751" stop-color="#e7cfff"/><stop offset="0.843" stop-color="#ffcfff"/><stop offset="0.920" stop-color="#ffcfeb"/></linearGradient><linearGradient id="cp27" x1="0" y1="0" x2="0" y2="1"><stop offset="0.000" stop-color="#ffe3e3"/><stop offset="0.010" stop-color="#fff1e3"/><stop offset="0.102" stop-color="#ffffe3"/><stop offset="0.195" stop-color="#f1ffe3"/><stop offset="0.287" stop-color="#e3ffe3"/><stop offset="0.379" stop-color="#e3fff1"/><stop offset="0.472" stop-color="#e3ffff"/><stop offset="0.564" stop-color="#e3f1ff"/><stop offset="0.656" stop-color="#e3e3ff"/><stop offset="0.749" stop-color="#f1e3ff"/><stop offset="0.841" stop-color="#ffe3ff"/><stop offset="0.918" stop-color="#ffe3f3"/></linearGradient><linearGradient id="cp28" x1="0" y1="0" x2="0" y2="1"><stop offset="0.000" stop-color="#ffefef"/><stop offset="0.008" stop-color="#fff7ef"/><stop offset="0.101" stop-color="#ffffef"/><stop offset="0.193" stop-color="#f7ffef"/><stop offset="0.285" stop-color="#efffef"/><stop offset="0.378" stop-color="#effff7"/><stop offset="0.470" stop-color="#efffff"/><stop offset="0.562" stop-color="#eff7ff"/><stop offset="0.655" stop-color="#efefff"/><stop offset="0.747" stop-color="#f7efff"/><stop offset="0.839" stop-color="#ffefff"/><stop offset="0.916" stop-color="#ffeff8"/></linearGradient><linearGradient id="cp29" x1="0" y1="0" x2="0" y2="1"><stop offset="0.000" stop-color="#fff5f5"/><stop offset="0.007" stop-color="#fffaf5"/><stop offset="0.099" stop-color="#fffff5"/><stop offset="0.192" stop-color="#fafff5"/><stop offset="0.284" stop-color="#f5fff5"/><stop offset="0.376" stop-color="#f5fffa"/><stop offset="0.469" stop-color="#f5ffff"/><stop offset="0.561" stop-color="#f5faff"/><stop offset="0.653" stop-color="#f5f5ff"/><stop offset="0.745" stop-color="#faf5ff"/><stop offset="0.838" stop-color="#fff5ff"/><stop offset="0.915" stop-color="#fff5fb"/></linearGradient><linearGradient id="cp30" x1="0" y1="0" x2="0" y2="1"><stop offset="0.000" stop-color="#fffcfc"/><stop offset="0.006" stop-color="#fffdfc"/><stop offset="0.098" stop-color="#fffffc"/><stop offset="0.191" stop-color="#fdfffc"/><stop offset="0.283" stop-color="#fcfffc"/><stop offset="0.375" stop-color="#fcfffd"/><stop offset="0.468" stop-color="#fcffff"/><stop offset="0.560" stop-color="#fcfdff"/><stop offset="0.652" stop-color="#fcfcff"/><stop offset="0.744" stop-color="#fdfcff"/><stop offset="0.837" stop-color="#fffcff"/><stop offset="0.914" stop-color="#fffcfe"/></linearGradient></defs><rect x="0" y="0" width="2" height="115" fill="url(#cp0)"/><rect x="2" y="0" width="2" height="115" fill="url(#cp1)"/><rect x="4" y="0" width="2" height="115" fill="url(#cp2)"/><rect x="6" y="0" width="2" height="115" fill="url(#cp3)"/><rect x="8" y="0" width="2" height="115" fill="url(#cp4)"/><rect x="10" y="0" width="2" height="115" fill="url(#cp5)"/><rect x="12" y="0" width="2" height="115" fill="url(#cp6)"/><rect x="14" y="0" width="2" height="115" fill="url(#cp7)"/><rect x="16" y="0" width="2" height="115" fill="url(#cp8)"/><rect x="18" y="0" width="2" height="115" fill="url(#cp9)"/><rect x="20" y="0" width="2" height="115" fill="url(#cp10)"/><rect x="22" y="0" width="2" height="115" fill="url(#cp11)"/><rect x="24" y="0" width="2" height="115" fill="url(#cp12)"/><rect x="26" y="0" width="2" height="115" fill="url(#cp13)"/><rect x="28" y="0" width="2" height="115" fill="url(#cp14)"/><rect x="30" y="0" width="2" height="115" fill="url(#cp15)"/><rect x="32" y="0" width="2" height="115" fill="url(#cp16)"/><rect x="34" y="0" width="2" height="115" fill="url(#cp17)"/><rect x="36" y="0" width="2" height="115" fill="url(#cp18)"/><rect x="38" y="0" width="2" height="115" fill="url(#cp19)"/><rect x="40" y="0" width="2" height="115" fill="url(#cp20)"/><rect x="42" y="0" width="2" height="115" fill="url(#cp21)"/><rect x="44" y="0" width="2" height="115" fill="url(#cp22)"/><rect x="46" y="0" width="2" height="115" fill="url(#cp23)"/><rect x="48" y="0" width="2" height="115" fill="url(#cp24)"/><rect x="50" y="0" width="2" height="115" fill="url(#cp25)"/><rect x="52" y="0" width="2" height="115" fill="url(#cp26)"/><rect x="54" y="0" width="2" height="115" fill="url(#cp27)"/><rect x="56" y="0" width="2" height="115" fill="url(#cp28)"/><rect x="58" y="0" width="2" height="115" fill="url(#cp29)"/><rect x="60" y="0" width="2" height="115" fill="url(#cp30)"/></svg>
<div class="t" style="left:974.5px;top:246.19px;font-size:11px;font-weight:normal;color:#000;letter-spacing:-0.415px;-webkit-text-stroke:0.2px #000;">Estilos</div>
<div class="abs" style="left:959px;top:261px;width:43px;height:24px;background:#0000fe;border:1px solid;border-color:#4040ff #000090 #000090 #4040ff"></div>
<svg class="ic" style="left:993px;top:269px" width="9" height="16" viewBox="0 0 9 16"><path d="M1 1.5l6.5 6.5L1 14.5z" fill="#0000a0" stroke="#e8e8ff" stroke-width="1.2"/></svg>
<div class="abs" style="left:979px;top:290px;width:43px;height:24px;background:#ffff9c;border:1px solid;border-color:#ffffd8 #c8c870 #c8c870 #ffffd8"></div>
<svg class="ic" style="left:1014px;top:300px" width="8" height="13" viewBox="0 0 8 13"><path d="M1 0l6.5 6.5L1 13z" fill="#000"/></svg>
<svg class="ic" style="left:962px;top:287px" width="18" height="14" viewBox="0 0 18 14"><path d="M4.5 1.5v9h10" fill="none" stroke="#000" stroke-width="1.4"/><path d="M4.5 0l-3.5 4h7zM17.5 10.5l-4-3.5v7z" fill="#000"/></svg>
<div class="t" style="left:969.5px;top:320.69px;font-size:11px;font-weight:normal;color:#000;letter-spacing:-0.197px;-webkit-text-stroke:0.2px #000;">Texturas</div>
<div class="btn" style="left:959px;top:336px;width:43px;height:24px"></div>
<svg class="ic" style="left:971px;top:340px" width="18" height="18" viewBox="0 0 18 18"><circle cx="9" cy="9" r="7.2" fill="none" stroke="#000" stroke-width="1.5"/><path d="M4 4l10 10" stroke="#000" stroke-width="1.5"/></svg>
<svg class="ic" style="left:993px;top:346px" width="8" height="13" viewBox="0 0 8 13"><path d="M1 0l6.5 6.5L1 13z" fill="#000"/></svg>
<div class="btn" style="left:979px;top:365px;width:43px;height:24px"></div>
<svg class="ic" style="left:992px;top:368px" width="18" height="18" viewBox="0 0 18 18"><circle cx="9" cy="9" r="7.2" fill="none" stroke="#000" stroke-width="1.5"/><path d="M4 4l10 10" stroke="#000" stroke-width="1.5"/></svg>
<svg class="ic" style="left:1014px;top:375px" width="8" height="13" viewBox="0 0 8 13"><path d="M1 0l6.5 6.5L1 13z" fill="#000"/></svg>
<svg class="ic" style="left:962px;top:362px" width="18" height="14" viewBox="0 0 18 14"><path d="M4.5 1.5v9h10" fill="none" stroke="#000" stroke-width="1.4"/><path d="M4.5 0l-3.5 4h7zM17.5 10.5l-4-3.5v7z" fill="#000"/></svg>
<div class="sunk" style="left:960px;top:392px;width:13px;height:13px;background:#f6f6f6"></div>
<div class="t" style="left:978.5px;top:393.19px;font-size:11px;font-weight:normal;color:#000;letter-spacing:-0.196px;-webkit-text-stroke:0.2px #000;">Bloqueo</div>
<div class="etch" style="left:956px;top:410px;width:65px;height:92px"></div>
<div class="t" style="left:960.5px;top:418.69px;font-size:11px;font-weight:normal;color:#000;letter-spacing:-0.953px;-webkit-text-stroke:0.2px #000;">R</div>
<div class="t" style="left:960.5px;top:431.69px;font-size:11px;font-weight:normal;color:#000;letter-spacing:-0.344px;-webkit-text-stroke:0.2px #000;">V</div>
<div class="t" style="left:960.5px;top:444.69px;font-size:11px;font-weight:normal;color:#000;letter-spacing:-0.344px;-webkit-text-stroke:0.2px #000;">A</div>
<div class="t" style="left:981.5px;top:418.69px;font-size:11px;font-weight:normal;color:#000;letter-spacing:-0.664px;-webkit-text-stroke:0.2px #000;">--</div>
<div class="t" style="left:981.5px;top:431.69px;font-size:11px;font-weight:normal;color:#000;letter-spacing:-0.664px;-webkit-text-stroke:0.2px #000;">--</div>
<div class="t" style="left:981.5px;top:444.69px;font-size:11px;font-weight:normal;color:#000;letter-spacing:-0.664px;-webkit-text-stroke:0.2px #000;">--</div>
<div class="abs" style="left:968px;top:471px;width:43px;height:28px;background:#808080;border:1px solid;border-color:#9a9a9a #fff #fff #9a9a9a"></div>
<svg class="ic" style="left:970px;top:473px" width="39" height="24" viewBox="0 0 39 24"><path d="M0 0l39 24M39 0L0 24" stroke="#000" stroke-width="1"/></svg>
<div class="abs" style="left:956px;top:505px;width:68px;height:1px;background:#a8a8a8"></div>
<div class="abs" style="left:956px;top:506px;width:68px;height:1px;background:#fff"></div>
<!-- minimized windows -->
<div class="mdi" style="left:30px;top:693px;width:158px;height:26px;border-radius:7px 7px 4px 4px;background:#5a5a5a">
  <div class="mdit" style="border-radius:6px 6px 3px 3px;height:23px"></div>
  <div class="wbtn" style="left:100px;top:5px"><svg viewBox="0 0 16 16"><path d="M6.5 3.5h6v6h-2" fill="none" stroke="#fff" stroke-width="1.4"/><rect x="3.5" y="6.5" width="6" height="6" fill="none" stroke="#fff" stroke-width="1.4"/><rect x="3" y="6" width="7" height="2" fill="#fff"/></svg></div>
  <div class="wbtn" style="left:119px;top:5px"><svg viewBox="0 0 16 16"><rect x="3.5" y="4.5" width="9" height="8" fill="none" stroke="#fff" stroke-width="1.4"/><rect x="3" y="3.5" width="10" height="3" fill="#fff"/></svg></div>
  <div class="wbtn" style="left:138px;top:5px"><svg viewBox="0 0 16 16"><path d="M3.5 3.5l9 9M12.5 3.5l-9 9" stroke="#fff" stroke-width="2.2"/></svg></div>
</div>
<svg class="ic" style="left:35px;top:699px" width="16" height="15" viewBox="0 0 17 16"><use href="#palette"/></svg>
<div class="t" style="left:55.5px;top:702.77px;font-size:11.5px;font-weight:bold;color:#fff;letter-spacing:0.338px;transform:scaleX(1.12);transform-origin:0 0;-webkit-text-stroke:0.25px #fff;">Examina...</div>
<div class="mdi" style="left:190px;top:693px;width:160px;height:26px;border-radius:7px 7px 4px 4px;background:#5a5a5a">
  <div class="mdit" style="border-radius:6px 6px 3px 3px;height:23px"></div>
  <div class="wbtn" style="left:100px;top:5px"><svg viewBox="0 0 16 16"><path d="M6.5 3.5h6v6h-2" fill="none" stroke="#fff" stroke-width="1.4"/><rect x="3.5" y="6.5" width="6" height="6" fill="none" stroke="#fff" stroke-width="1.4"/><rect x="3" y="6" width="7" height="2" fill="#fff"/></svg></div>
  <div class="wbtn" style="left:119px;top:5px"><svg viewBox="0 0 16 16"><rect x="3.5" y="4.5" width="9" height="8" fill="none" stroke="#fff" stroke-width="1.4"/><rect x="3" y="3.5" width="10" height="3" fill="#fff"/></svg></div>
  <div class="wbtn" style="left:138px;top:5px"><svg viewBox="0 0 16 16"><path d="M3.5 3.5l9 9M12.5 3.5l-9 9" stroke="#fff" stroke-width="2.2"/></svg></div>
</div>
<svg class="ic" style="left:198px;top:699px" width="12" height="15" viewBox="0 0 12 15"><use href="#docicon"/></svg>
<div class="t" style="left:216px;top:702.77px;font-size:11.5px;font-weight:bold;color:#fff;letter-spacing:0.491px;transform:scaleX(1.12);transform-origin:0 0;-webkit-text-stroke:0.25px #fff;">Imagen1...</div>

<!-- status bar -->
<div id="status" class="abs"></div>
<div class="t" style="left:2px;top:727.19px;font-size:11px;font-weight:normal;color:#000;letter-spacing:-0.120px;-webkit-text-stroke:0.2px #000;">Para obtener ayuda presione la tecla F1</div>
<div class="t" style="left:837px;top:727.19px;font-size:11px;font-weight:normal;color:#000;letter-spacing:-0.589px;-webkit-text-stroke:0.2px #000;">n:  40</div>

<!-- floating palettes -->
<div class="pal" style="left:645px;top:711px;width:191px;height:30px"></div>
<div class="abs" style="left:647px;top:731px;width:188px;height:10px;background:linear-gradient(90deg,#f0f0f0 0,#f0f0f0 42px,#fafafa 60px,#fff 100%)"></div>
<div class="abs" style="left:669px;top:732px;width:1px;height:9px;background:#a0a0a0"></div>
<div class="abs" style="left:688px;top:733px;width:1px;height:8px;background:#a0a0a0"></div>
<svg class="ic" style="left:654px;top:734px;overflow:hidden" width="12" height="6" viewBox="0 0 12 6"><path d="M6 1L0.500 6.500h11z" fill="#50c0b0" stroke="#000" stroke-width="1.200"/></svg>
<svg class="ic" style="left:675px;top:735px;overflow:hidden" width="13" height="5" viewBox="0 0 13 5"><rect x="1" y="1" width="11" height="6" rx="2" fill="#fff" stroke="#000" stroke-width="1.600"/><rect x="4" y="3.500" width="5" height="3" fill="none" stroke="#000" stroke-width="1.200"/></svg>
<svg class="ic" style="left:817px;top:731px;overflow:hidden" width="14" height="9" viewBox="0 0 14 9"><path d="M1 2l4 4-4 4z" fill="#000"/><path d="M12 5.500c-3 0-5 1.500-5 4" fill="none" stroke="#000" stroke-width="1.200"/></svg>
<div class="t" style="left:647.5px;top:716.27px;font-size:11.5px;font-weight:bold;color:#fff;letter-spacing:0.113px;transform:scaleX(1.12);transform-origin:0 0;-webkit-text-stroke:0.25px #fff;">Configuración - Bote de...</div>
<div class="abs" style="left:799px;top:715px;width:14px;height:12px;background:#fff"></div>
<svg class="ic" style="left:799px;top:715px" width="14" height="12" viewBox="0 0 14 12"><path d="M7 3l5 5H2zM2 9h10v1.5H2z" fill="#000"/></svg>
<div class="abs" style="left:818px;top:716px;width:12px;height:11px;background:#7a7a7a;border:1px solid #b0b0b0"><svg viewBox="0 0 10 9" style="position:absolute;left:0;top:0;width:10px;height:9px"><path d="M2 1.5l6 6M8 1.5l-6 6" stroke="#fff" stroke-width="1.8"/></svg></div>

<div class="pal" style="left:860px;top:717px;width:160px;height:23px"></div>
<div class="t" style="left:864px;top:723.97px;font-size:11.5px;font-weight:bold;color:#fff;letter-spacing:0.150px;transform:scaleX(1.12);transform-origin:0 0;-webkit-text-stroke:0.25px #fff;">Paleta Capas - Cap</div>
<div class="abs" style="left:983px;top:722px;width:14px;height:11px;background:#fff"></div>
<svg class="ic" style="left:983px;top:722px" width="14" height="11" viewBox="0 0 15 12"><path d="M2 2h11v1.5H2zM2.5 5h10l-5 5z" fill="#000"/></svg>
<div class="abs" style="left:1002px;top:722px;width:13px;height:12px;background:#7a7a7a;border:1px solid #b0b0b0"><svg viewBox="0 0 11 10" style="position:absolute;left:0;top:0;width:11px;height:10px"><path d="M2.5 2l6 6M8.5 2l-6 6" stroke="#fff" stroke-width="1.8"/></svg></div>

<!-- taskbar -->
<div id="taskbar" class="abs">
  <div class="tbtn" style="left:49px;width:157px"></div>
  <div class="tbtn" style="left:208px;width:158px"></div>
  <div class="abs" style="left:368px;top:1px;width:158px;height:26px;border:1px solid #707070;border-radius:2px;background:#0d0d0d"></div>
</div>
<div class="t" style="left:78px;top:748.29px;font-size:11px;font-weight:normal;color:#f4f4f4;letter-spacing:0.001px;">~ Tutoriales Paint Sh...</div>
<div class="t" style="left:237.5px;top:748.29px;font-size:11px;font-weight:normal;color:#f4f4f4;letter-spacing:-0.032px;">Documento1 - Micros...</div>
<div class="t" style="left:399px;top:748.29px;font-size:11px;font-weight:normal;color:#f4f4f4;letter-spacing:-0.145px;">Jasc Paint Shop Pro - ...</div>
<div class="t" style="left:957.5px;top:748.69px;font-size:11px;font-weight:normal;color:#f4f4f4;letter-spacing:0.052px;">02:02 p.m.</div>
<svg class="ic" style="left:885px;top:751px" width="5" height="8" viewBox="0 0 5 8"><path d="M5 0v8L0 4z" fill="#fff"/></svg>
<!-- windows logo -->
<svg class="ic" style="left:14px;top:744px" width="19" height="19" viewBox="0 0 19 19"><path d="M2.500 1.500c2.500-1.500 5-1 7.500.5l-1.500 7c-2.500-1.500-5-1.800-7.300-.5z" fill="#e84818"/><path d="M10.500 3c2.500 1.500 5 1.800 7.500.5l-1.500 7c-2.500 1.300-5 1-7.500-.5z" fill="#58b020"/><path d="M1 9.500c2.500-1.300 5-1 7.300.5l-1.500 6.500c-2.300-1.500-4.800-1.800-7.300-.5z" fill="#4890e0"/><path d="M9 11c2.500 1.500 5 1.800 7.300.5l-1.500 6.500c-2.300 1.300-4.800 1-7.300-.5z" fill="#f0c020"/></svg>
<!-- IE -->
<svg class="ic" style="left:58px;top:745px" width="18" height="18" viewBox="0 0 18 18"><circle cx="10" cy="9.500" r="6.200" fill="#1868c0"/><path d="M6 9.500h8.500c0-6-8.500-6-8.500 0 0 5 6 5.500 8 2" fill="none" stroke="#70d8f8" stroke-width="2"/><path d="M16.500 2.500C13 0 4 6 1.500 12.500c-1 3 1 4 4 2.500" fill="none" stroke="#e8c860" stroke-width="1.600"/></svg>
<!-- Word -->
<svg class="ic" style="left:218px;top:745px" width="16" height="17" viewBox="0 0 16 17"><path d="M4 0.500h8l3.500 3.500v12.500h-11.500z" fill="#e8e8ff" stroke="#8890c8" stroke-width=".8"/><path d="M12 0.500v3.500h3.500" fill="#c8c8f0" stroke="#8890c8" stroke-width=".6"/><rect x="0.500" y="2.500" width="9.500" height="9" fill="#f4f4ff" stroke="#203080" stroke-width="1"/><path d="M2 4.500l1.500 5.500 1.700-4.500 1.700 4.500 1.600-5.500" fill="none" stroke="#102068" stroke-width="1.500"/><path d="M6 13.500h6" stroke="#9098c8" stroke-width=".8"/></svg>
<!-- PSP palette -->
<svg class="ic" style="left:378px;top:746px" width="17" height="14" viewBox="0 0 17 16" preserveAspectRatio="none"><use href="#palette"/></svg>
<!-- tray -->
<svg class="ic" style="left:900px;top:746px" width="14" height="17" viewBox="0 0 14 17"><circle cx="7" cy="4" r="3.300" fill="#50c050"/><path d="M0.500 15c0-5 3-7.500 6.500-7.500s6.500 2.500 6.500 7.500c-2 1.500-11 1.500-13 0z" fill="#40a848"/><ellipse cx="6" cy="3" rx="1.500" ry="1" fill="#a0e8a0"/><path d="M3 11.500h8" stroke="#90e090" stroke-width="1.500"/></svg>
<svg class="ic" style="left:917px;top:746px" width="16" height="16" viewBox="0 0 16 16"><rect x="0" y="0" width="16" height="16" rx="1" fill="#c81818"/><path d="M2 5V2h3M11 2h3v3M2 11v3h3M11 14h3v-3" fill="none" stroke="#fff" stroke-width="1.200"/><rect x="2.500" y="6" width="11" height="4" fill="#f0d0d0"/><circle cx="8" cy="8" r="2" fill="#a01010"/></svg>
<svg class="ic" style="left:935px;top:746px" width="16" height="16" viewBox="0 0 16 16"><rect x="0" y="0" width="16" height="16" rx="1" fill="#fbe8e4"/><path d="M8 8L8 1l4 2z" fill="#58b040"/><path d="M8 8l5-4 2 4z" fill="#3890d8"/><path d="M8 8l7 1-2 4z" fill="#6050c0"/><path d="M8 8l4 6-4 1z" fill="#c040a8"/><path d="M8 8l-1 7-4-2z" fill="#e83858"/><path d="M8 8l-6 4-1-4z" fill="#f07020"/><path d="M8 8L1 7l2-4z" fill="#f0c020"/><path d="M8 8L4 2l4-1z" fill="#c8d830"/></svg>
</div>
</body>
</html>
